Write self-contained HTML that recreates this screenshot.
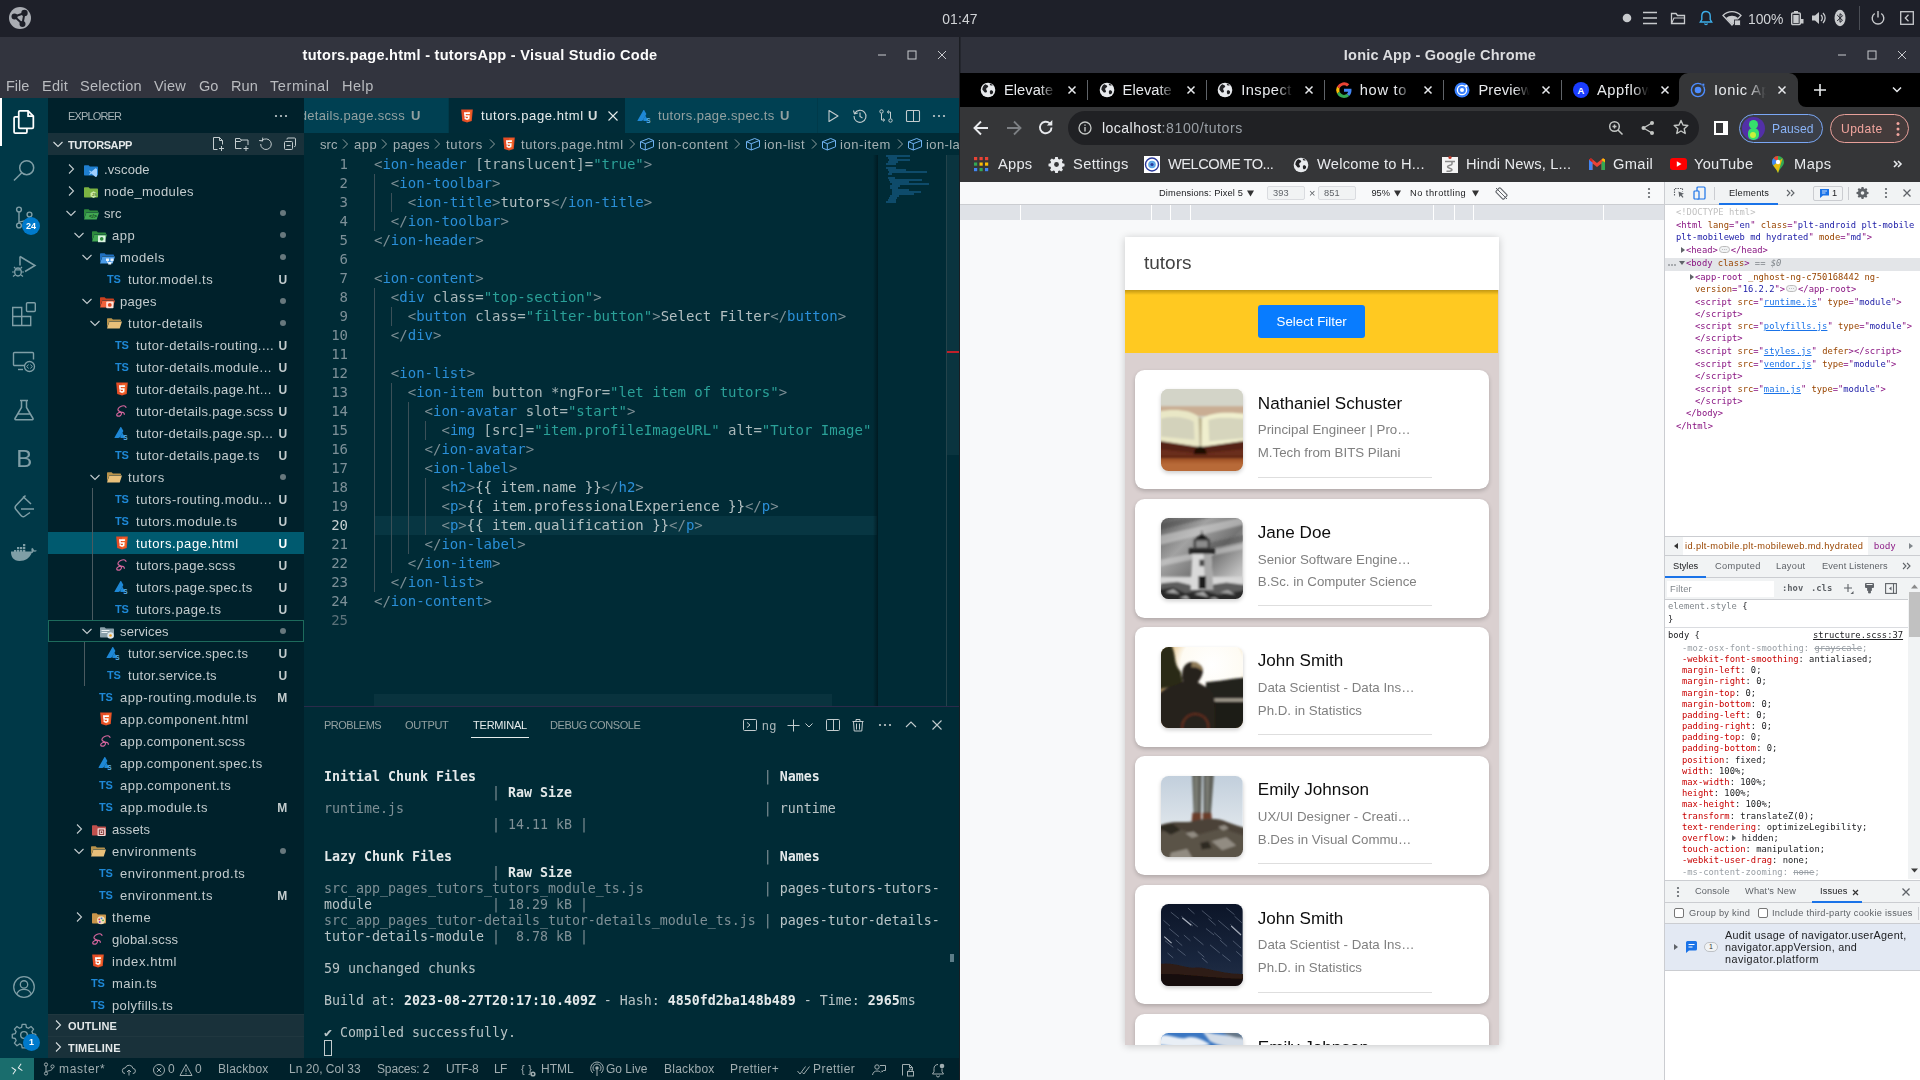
<!DOCTYPE html>
<html lang="en"><head><meta charset="utf-8"><title>tutors.page.html - tutorsApp - Visual Studio Code</title>
<style>
*{box-sizing:border-box;margin:0;padding:0}
html,body{width:1920px;height:1080px;overflow:hidden;background:#fff}
body{position:relative;font-family:"Liberation Sans",sans-serif;font-size:13px;color:#ccc;-webkit-font-smoothing:antialiased}
.n{font-family:"Liberation Sans",sans-serif;white-space:pre;position:relative;top:1px}
.m{font-family:"DejaVu Sans Mono","Liberation Mono",monospace;white-space:pre}
.a{position:absolute}
.n,.m,.g{opacity:.999}
svg{display:block;overflow:visible}
.b{font-weight:bold}
/* top panel */
#panel{left:0;top:0;width:1920px;height:37px;background:#1e2029}
#panelshade{left:0;top:36px;width:1920px;height:1px;background:#282a33}
/* title bars */
.tb{top:37px;height:36px;background:#32343e}
.tbt{top:0;height:36px;line-height:35px;font-size:14.55px;font-weight:bold;color:#fcfcfc;text-align:center;width:100%}
/* vscode */
#menu{left:0;top:73px;width:960px;height:25px;background:#32343e;color:#b9bbbf;font-size:14.55px;line-height:24px}
#act{left:0;top:98px;width:48px;height:960px;background:#003847}
#side{left:48px;top:98px;width:256px;height:960px;background:#00212b;overflow:hidden}
.row{left:0;width:256px;height:22px;line-height:22px;color:#c3ccce;font-size:13px}
.row .lbl{position:absolute;top:0}
.row .bd{position:absolute;top:0;left:225px;width:20px;text-align:center;font-size:12px;font-weight:bold;color:#c3ccce}
.row .dot{position:absolute;top:8px;left:232px;width:6px;height:6px;border-radius:3px;background:#8a9699;opacity:.75}
#tabs{left:304px;top:98px;width:656px;height:35px;background:#004052;overflow:hidden}
#bc{left:304px;top:133px;width:656px;height:22px;background:#002b36;color:#a3b0b3;font-size:13px;line-height:22px;overflow:hidden}
#ed{left:304px;top:155px;width:656px;height:551px;background:#002b36;overflow:hidden}
.cl{left:70px;height:19px;line-height:19px;font-size:14px;color:#b4c0c2}
.ln{left:0;width:44px;text-align:right;height:19px;line-height:19px;font-size:14px;color:#7d9098}
.tg{color:#2a8fd8}.pu{color:#7d8f95}.st{color:#2aa198}.at{color:#a9b8ba}
#pnl{left:304px;top:706px;width:656px;height:352px;background:#002b36;border-top:1px solid #2b2b4a;overflow:hidden}
.tl{left:20px;height:16px;line-height:16px;font-size:13.29px;color:#b9c4c6}
.dim{color:#7f9096}
.tbold{font-weight:bold;color:#e4e9ea}
#status{left:0;top:1058px;width:960px;height:22px;background:#00212b;color:#a0adb0;font-size:12px;line-height:20px}
/* chrome */
#ctabs{left:960px;top:73px;width:960px;height:34px;background:#000}
#ctool{left:960px;top:107px;width:960px;height:41px;background:#353638}
#cbm{left:960px;top:148px;width:960px;height:34px;background:#353638;color:#e8eaed;font-size:14.67px;line-height:30px}
#dvt{left:960px;top:182px;width:704px;height:23px;background:#f8f9fa;border-bottom:1px solid #cbcdd1;color:#202124;font-size:9.25px;line-height:21px}
#ruler{left:960px;top:205px;width:704px;height:15px;background:#dfe2e7}
#view{left:960px;top:220px;width:704px;height:860px;background:#f8f9fa;overflow:hidden}
#dt{left:1664px;top:182px;width:256px;height:898px;background:#fff;border-left:1px solid #cbcdd1;overflow:hidden;color:#202124}
#dt .n{top:0}
.dl{height:12.5px;line-height:12.5px;font-size:8.8px}
</style></head>
<body class="">
<div id="panel" class="a"><svg class="a" style="left:9px;top:7px" width="22" height="22" viewBox="0 0 22 22"><circle cx="11" cy="11" r="11" fill="#a9acb2"></circle><circle cx="5.500" cy="9.500" r="3" fill="#1e2029"></circle><circle cx="15.500" cy="6" r="3.200" fill="#1e2029"></circle><circle cx="13.500" cy="17" r="3" fill="#1e2029"></circle><path d="M5.500 9.500l10-3.500-2 11z" fill="none" stroke="#1e2029" stroke-width="2"></path></svg><div class="a" style="left:900px;top:0;width:120px;height:37px;line-height:36px;text-align:center;font-size:13.900px;color:#d3d5d8"><span class="n" style="letter-spacing: 0.15px;">01:47</span></div><svg class="a" style="left:1622px;top:13px" width="10" height="10" viewBox="0 0 10 10"><circle cx="5" cy="5" r="4.300" fill="#c8cacd"></circle></svg><svg class="a" style="left:1643px;top:11px" width="14" height="14" viewBox="0 0 14 14"><path d="M0 1.500h14M0 7h14M0 12.500h14" stroke="#c8cacd" stroke-width="1.700"></path></svg><svg class="a" style="left:1670px;top:10px" width="16" height="16" viewBox="0 0 16 16"><path d="M1.500 13.500v-10h4.500l1.500 2h7v8z" fill="none" stroke="#c8cacd" stroke-width="1.300"></path><path d="M1.500 13.500l2.500-5.500h10.500" fill="none" stroke="#c8cacd" stroke-width="1.100"></path></svg><svg class="a" style="left:1699px;top:10px" width="14" height="16" viewBox="0 0 14 16"><path d="M7 1.500c-2.800 0-4.200 2-4.200 4.500v3.500L1.300 12h11.400l-1.500-2.500V6c0-2.500-1.400-4.500-4.200-4.500z" fill="none" stroke="#3daee9" stroke-width="1.400"></path><path d="M5.500 13.500a1.600 1.600 0 003 0" fill="none" stroke="#3daee9" stroke-width="1.300"></path></svg><svg class="a" style="left:1722px;top:10px" width="20" height="16" viewBox="0 0 20 16"><path d="M1 5.500a12.500 12.500 0 0118 0L10 15z" fill="none" stroke="#c8cacd" stroke-width="1.300"></path><path d="M4 8a9 9 0 0112 0L10 14.500z" fill="#c8cacd"></path><rect x="12.500" y="10" width="6" height="5.500" fill="#c8cacd" stroke="#1e2029" stroke-width=".8"></rect></svg><div class="a" style="left:1748px;top:0;height:37px;line-height:36px;font-size:13.900px;color:#d3d5d8"><span class="n" style="letter-spacing: -0.04px;">100%</span></div><svg class="a" style="left:1790px;top:10px" width="14" height="16" viewBox="0 0 14 16"><rect x="1.700" y="3" width="8.600" height="11.500" rx="1" fill="none" stroke="#c8cacd" stroke-width="1.400"></rect><rect x="4" y="1" width="4" height="2" fill="#c8cacd"></rect><rect x="3.300" y="5" width="5.400" height="8" fill="#c8cacd"></rect><path d="M10 9h3.500v4.500H10z" fill="#c8cacd"></path></svg><svg class="a" style="left:1811px;top:10px" width="17" height="16" viewBox="0 0 17 16"><path d="M1 5.500h3l4-3.500v12l-4-3.500H1z" fill="#c8cacd"></path><path d="M10 5a4 4 0 010 6M12 3a7 7 0 010 10" fill="none" stroke="#c8cacd" stroke-width="1.300"></path></svg><svg class="a" style="left:1834px;top:9px" width="12" height="18" viewBox="0 0 12 18"><ellipse cx="6" cy="9" rx="5.500" ry="8.300" fill="#c8cacd"></ellipse><path d="M3.200 6l5.300 5.300L6 13.300V4.700l2.500 2L3.200 12" fill="none" stroke="#1e2029" stroke-width="1"></path></svg><div class="a" style="left:1859px;top:6px;width:1px;height:24px;background:#4a4d55"></div><svg class="a" style="left:1870px;top:10px" width="16" height="16" viewBox="0 0 16 16"><path d="M8 1v6.500" stroke="#c8cacd" stroke-width="1.400"></path><path d="M4.700 3.500a5.800 5.800 0 106.600 0" fill="none" stroke="#c8cacd" stroke-width="1.400"></path></svg><svg class="a" style="left:1900px;top:11px" width="14" height="14" viewBox="0 0 14 14"><rect x=".7" y=".7" width="12.600" height="12.600" fill="none" stroke="#c8cacd" stroke-width="1.300"></rect><path d="M8.500 3.800L5.300 7l3.200 3.200" fill="none" stroke="#c8cacd" stroke-width="1.300"></path></svg></div><div class="a tb" style="left:0;width:960px"><div class="a tbt"><span class="n" style="letter-spacing: 0.27px;">tutors.page.html - tutorsApp - Visual Studio Code</span></div><svg class="a" style="left:876px;top:12px" width="12" height="12" viewBox="0 0 12 12"><path d="M2 6h8" stroke="#c9cbcf" stroke-width="1"></path></svg><svg class="a" style="left:906px;top:12px" width="12" height="12" viewBox="0 0 12 12"><rect x="2" y="2" width="8" height="8" fill="none" stroke="#c9cbcf" stroke-width="1"></rect></svg><svg class="a" style="left:936px;top:12px" width="12" height="12" viewBox="0 0 12 12"><path d="M2 2l8 8M10 2l-8 8" stroke="#c9cbcf" stroke-width="1"></path></svg></div><div id="menu" class="a"><span class="a" style="left:6px;top:0"><span class="n" style="letter-spacing: -0.05px;">File</span></span><span class="a" style="left:42px;top:0"><span class="n" style="letter-spacing: 0.24px;">Edit</span></span><span class="a" style="left:80px;top:0"><span class="n" style="letter-spacing: 0.23px;">Selection</span></span><span class="a" style="left:154px;top:0"><span class="n" style="letter-spacing: 0.14px;">View</span></span><span class="a" style="left:199px;top:0"><span class="n">Go</span></span><span class="a" style="left:231px;top:0"><span class="n" style="letter-spacing: 0.11px;">Run</span></span><span class="a" style="left:270px;top:0"><span class="n" style="letter-spacing: 0.57px;">Terminal</span></span><span class="a" style="left:342px;top:0"><span class="n" style="letter-spacing: 0.44px;">Help</span></span></div><div id="act" class="a"><div class="a" style="left:0;top:0;width:2px;height:48px;background:#fff"></div><svg class="a" style="left:10px;top:10px" width="28" height="28" viewBox="0 0 24 24"><path d="M8.500 2.500h7l4.500 4.500v9.500a1 1 0 01-1 1h-10.500a1 1 0 01-1-1v-13a1 1 0 011-1z" fill="none" stroke="#fff" stroke-width="1.500"></path><path d="M15.500 2.500v4.500h4.500" fill="none" stroke="#fff" stroke-width="1.500"></path><path d="M7.500 7.500h-3a1 1 0 00-1 1v12a1 1 0 001 1h9a1 1 0 001-1v-3" fill="none" stroke="#fff" stroke-width="1.500"></path></svg><svg class="a" style="left:12px;top:60px" width="24" height="24" viewBox="0 0 24 24"><circle cx="14.700" cy="9.700" r="7" fill="none" stroke="#7f9ea6" stroke-width="1.500"></circle><path d="M9.800 14.700L2 22.500" stroke="#7f9ea6" stroke-width="1.500"></path></svg><svg class="a" style="left:12px;top:107px" width="24" height="24" viewBox="0 0 24 24"><circle cx="7" cy="4.500" r="2.400" fill="none" stroke="#7f9ea6" stroke-width="1.400"></circle><circle cx="7" cy="20.500" r="2.400" fill="none" stroke="#7f9ea6" stroke-width="1.400"></circle><circle cx="17.500" cy="9.500" r="2.400" fill="none" stroke="#7f9ea6" stroke-width="1.400"></circle><path d="M7 7v11M17.500 12c0 3.500-5 4-10 5" fill="none" stroke="#7f9ea6" stroke-width="1.400"></path></svg><div class="a b" style="left:22px;top:119px;width:18px;height:18px;border-radius:9px;background:#007acc;color:#fff;font-size:9px;line-height:18px;text-align:center"><span class="g">24</span></div><svg class="a" style="left:10px;top:155px" width="28" height="26" viewBox="0 0 28 26"><path d="M10 3.500v0L25 12.500 15 18.500" fill="none" stroke="#7f9ea6" stroke-width="1.500"></path><path d="M10 3.500v9" stroke="#7f9ea6" stroke-width="1.500"></path><ellipse cx="8" cy="19" rx="3.300" ry="4" fill="none" stroke="#7f9ea6" stroke-width="1.400"></ellipse><path d="M5.500 15.500L4 14M10.500 15.500L12 14M4.500 19H2M11.500 19H14M5 22l-2 1.500M11 22l2 1.500M5 16.800h6" fill="none" stroke="#7f9ea6" stroke-width="1.200"></path></svg><svg class="a" style="left:12px;top:204px" width="24" height="24" viewBox="0 0 24 24"><path d="M.700 5.500h9v9h9v9h-18zM.700 14.500h9M9.700 14.500v9" fill="none" stroke="#7f9ea6" stroke-width="1.400"></path><rect x="14.500" y=".700" width="8.800" height="8.800" rx="1" fill="none" stroke="#7f9ea6" stroke-width="1.400"></rect></svg><svg class="a" style="left:12px;top:252px" width="24" height="24" viewBox="0 0 24 24"><path d="M12 15.500H2.500a1 1 0 01-1-1v-11a1 1 0 011-1h18a1 1 0 011 1v6" fill="none" stroke="#7f9ea6" stroke-width="1.400"></path><path d="M6 19.500h5" stroke="#7f9ea6" stroke-width="1.400"></path><circle cx="17.500" cy="16.500" r="5" fill="none" stroke="#7f9ea6" stroke-width="1.300"></circle><path d="M16.500 14.500l-1.700 2 1.700 2M18.500 14.500l1.700 2-1.700 2" fill="none" stroke="#7f9ea6" stroke-width="1"></path></svg><svg class="a" style="left:12px;top:300px" width="24" height="24" viewBox="0 0 24 24"><path d="M8 2.500h8M9.500 2.500v7L3 20.500a.8.800 0 00.700 1.200h16.600a.8.800 0 00.700-1.200L14.500 9.500v-7M6 16h12" fill="none" stroke="#7f9ea6" stroke-width="1.500"></path></svg><div class="a" style="left:0;top:346px;width:48px;height:28px;line-height:28px;text-align:center;font-size:24px;color:#7f9ea6"><span class="n" style="letter-spacing: -0.41px;">B</span></div><svg class="a" style="left:12px;top:396px" width="24" height="26" viewBox="0 0 24 26"><path d="M13.500 1.500L4 11.500a3 3 0 000 4l5 6a3 3 0 004 .5l5-3.500" fill="none" stroke="#7f9ea6" stroke-width="1.500"></path><path d="M11 2.500l8 7.500" fill="none" stroke="#7f9ea6" stroke-width="1.500"></path><path d="M9 15h13" stroke="#7f9ea6" stroke-width="1.500"></path></svg><svg class="a" style="left:10px;top:446px" width="28" height="22" viewBox="0 0 28 22"><path d="M1 9.500h19.500c1.500 0 2.500-.7 3-2 1 .3 2.500.2 3.500-.8-.8-.5-2-.7-3-.3-.2-1.300-1-2.200-2-2.700-.8 1.200-.8 2.600-.2 3.800H1c-.3 5 2.500 9.500 8.500 9.500 6 0 10-3 12-7.500z" fill="#7f9ea6"></path><path d="M4 6h2.300v2.300H4zM7 6h2.300v2.300H7zM10 6h2.300v2.300H10zM13 6h2.300v2.300H13zM7 3h2.300v2.300H7zM10 3h2.300v2.300H10zM13 3h2.300v2.300H13zM13 0h2.300v2.300H13z" fill="#7f9ea6"></path></svg><svg class="a" style="left:12px;top:877px" width="24" height="24" viewBox="0 0 28 28"><circle cx="14" cy="14" r="12" fill="none" stroke="#7f9ea6" stroke-width="1.500"></circle><circle cx="14" cy="11" r="4.300" fill="none" stroke="#7f9ea6" stroke-width="1.500"></circle><path d="M5.500 22.300c1.500-4 4.500-5.500 8.500-5.500s7 1.500 8.500 5.500" fill="none" stroke="#7f9ea6" stroke-width="1.500"></path></svg><svg class="a" style="left:12px;top:925px" width="24" height="24" viewBox="0 0 26 26"><circle cx="13" cy="13" r="3.600" fill="none" stroke="#7f9ea6" stroke-width="1.500"></circle><path d="M11 1.500h4l.6 3.200 2.300 1 2.700-1.900 2.800 2.800-1.900 2.700 1 2.300 3.200.6v4l-3.200.6-1 2.300 1.900 2.700-2.800 2.800-2.700-1.900-2.300 1-.6 3.200h-4l-.6-3.200-2.300-1-2.700 1.900-2.800-2.800 1.900-2.700-1-2.300-3.200-.6v-4l3.200-.6 1-2.300-1.900-2.700 2.800-2.800 2.700 1.900 2.300-1z" fill="none" stroke="#7f9ea6" stroke-width="1.400" stroke-linejoin="round"></path></svg><div class="a b" style="left:23px;top:936px;width:17px;height:17px;border-radius:9px;background:#007acc;color:#fff;font-size:9px;line-height:17px;text-align:center"><span class="g">1</span></div></div><div id="side" class="a"><div class="a" style="left:20px;top:0;height:35px;line-height:35px;font-size:11px;color:#a7b3b6"><span class="n" style="letter-spacing: -0.85px;">EXPLORER</span></div><svg class="a" style="left:225px;top:10px" width="16" height="16" viewBox="0 0 16 16"><circle cx="3" cy="8" r="1.100" fill="#c3ccce"></circle><circle cx="8" cy="8" r="1.100" fill="#c3ccce"></circle><circle cx="13" cy="8" r="1.100" fill="#c3ccce"></circle></svg><div class="a" style="left:0;top:35px;width:256px;height:22px;background:#19313a"></div><svg class="a" style="left:2px;top:38px" width="16" height="16" viewBox="0 0 16 16"><path d="M3.5 6l4.5 4.5L12.5 6" fill="none" stroke="#d5dcde" stroke-width="1.1"></path></svg><div class="a b" style="left:20px;top:35px;height:22px;line-height:22px;font-size:11px;color:#e3e8e9"><span class="n b" style="letter-spacing: -0.4px;">TUTORSAPP</span></div><svg class="a" style="left:162px;top:38px" width="16" height="16" viewBox="0 0 16 16"><path d="M9.500 1.500H3.500v12h4M9.500 1.500l3 3v4M9.500 1.500v3h3" fill="none" stroke="#c3ccce" stroke-width="1"></path><path d="M11.500 10v5M9 12.500h5" stroke="#c3ccce" stroke-width="1"></path></svg><svg class="a" style="left:186px;top:38px" width="16" height="16" viewBox="0 0 16 16"><path d="M7.500 12.500H1.500v-10h4.500l1 1.500h7v5" fill="none" stroke="#c3ccce" stroke-width="1"></path><path d="M1.500 5.500h5l1-1.500" fill="none" stroke="#c3ccce" stroke-width="1"></path><path d="M12 10v5M9.500 12.500h5" stroke="#c3ccce" stroke-width="1"></path></svg><svg class="a" style="left:210px;top:38px" width="16" height="16" viewBox="0 0 16 16"><path d="M4.200 4.500A5.300 5.300 0 112.700 8" fill="none" stroke="#c3ccce" stroke-width="1"></path><path d="M4.500 1.500v3.300h-3.300" fill="none" stroke="#c3ccce" stroke-width="1" transform="rotate(8 4 4)"></path></svg><svg class="a" style="left:234px;top:38px" width="16" height="16" viewBox="0 0 16 16"><rect x="2.500" y="5.500" width="8" height="8" rx="1" fill="none" stroke="#c3ccce" stroke-width="1"></rect><path d="M5 3.500v-.5a1 1 0 011-1h6.500a1 1 0 011 1v6.500a1 1 0 01-1 1h-.5" fill="none" stroke="#c3ccce" stroke-width="1"></path><path d="M4.500 9.500h4" stroke="#c3ccce" stroke-width="1"></path></svg><div class="a row" style="top:60px;"><svg class="a" style="left:15px;top:3px" width="16" height="16" viewBox="0 0 16 16"><path d="M6 3.5l4.5 4.5L6 12.5" fill="none" stroke="#c3ccce" stroke-width="1.1"></path></svg><svg class="a" style="left:35px;top:4px" width="16" height="16" viewBox="0 0 16 16"><path d="M1 4.200c0-.6.400-1 1-1h3.600l1.300 1.400H14c.6 0 1 .4 1 1v7c0 .6-.4 1-1 1H2c-.6 0-1-.4-1-1z" fill="#1f7fd0"></path><path d="M12.500 6.300 8.300 9.800l-1.500-1.200-.8.500 1.600 1.600L6 12.300l.8.500 1.500-1.200 4.200 3.500 1.500-.7V7z" fill="#9fd0ff"></path></svg><span class="lbl" style="left:56px;top:0px;color:#c3ccce"><span class="n" style="letter-spacing: 0.13px;">.vscode</span></span></div><div class="a row" style="top:82px;"><svg class="a" style="left:15px;top:3px" width="16" height="16" viewBox="0 0 16 16"><path d="M6 3.5l4.5 4.5L6 12.5" fill="none" stroke="#c3ccce" stroke-width="1.1"></path></svg><svg class="a" style="left:35px;top:4px" width="16" height="16" viewBox="0 0 16 16"><path d="M1 4.200c0-.6.400-1 1-1h3.600l1.300 1.400H14c.6 0 1 .4 1 1v7c0 .6-.4 1-1 1H2c-.6 0-1-.4-1-1z" fill="#7cb342"></path><path d="M10.500 7.200l3 1.700v3.400l-3 1.700-3-1.700V8.900z" fill="#c9e6a8"></path><text x="9" y="12.300" font-size="4" fill="#4a7c1c" font-family="Liberation Sans,sans-serif" font-weight="bold">JS</text></svg><span class="lbl" style="left:56px;top:0px;color:#c3ccce"><span class="n" style="letter-spacing: 0.39px;">node_modules</span></span></div><div class="a row" style="top:104px;"><svg class="a" style="left:15px;top:3px" width="16" height="16" viewBox="0 0 16 16"><path d="M3.5 6l4.5 4.5L12.5 6" fill="none" stroke="#c3ccce" stroke-width="1.1"></path></svg><svg class="a" style="left:35px;top:4px" width="16" height="16" viewBox="0 0 16 16"><path d="M1 4.200c0-.6.400-1 1-1h3.600l1.300 1.400H14c.6 0 1 .4 1 1v.4H3.600L1 12.500z" fill="#2e8b3d"></path><path d="M3.400 6.400H16l-2.300 7.200H1z" fill="#43a853"></path><text x="6" y="12.300" font-size="5.500" fill="#0c3d17" font-family="Liberation Sans,sans-serif" font-weight="bold">&lt;/&gt;</text></svg><span class="lbl" style="left:56px;top:0px;color:#c3ccce"><span class="n" style="letter-spacing: 0.08px;">src</span></span><span class="dot" style="margin:0px 0 0 0px"></span></div><div class="a row" style="top:126px;"><svg class="a" style="left:23px;top:3px" width="16" height="16" viewBox="0 0 16 16"><path d="M3.5 6l4.5 4.5L12.5 6" fill="none" stroke="#c3ccce" stroke-width="1.1"></path></svg><svg class="a" style="left:43px;top:4px" width="16" height="16" viewBox="0 0 16 16"><path d="M1 4.200c0-.6.400-1 1-1h3.600l1.300 1.400H14c.6 0 1 .4 1 1v.4H3.600L1 12.500z" fill="#2e8b3d"></path><path d="M3.400 6.400H16l-2.300 7.200H1z" fill="#43a853"></path><rect x="7" y="7.500" width="7.500" height="6.700" fill="#d9f2de"></rect><circle cx="10.700" cy="10.900" r="1.800" fill="#2e8b3d"></circle></svg><span class="lbl" style="left:64px;top:0px;color:#c3ccce"><span class="n" style="letter-spacing: 0.53px;">app</span></span><span class="dot" style="margin:0px 0 0 0px"></span></div><div class="a row" style="top:148px;"><svg class="a" style="left:31px;top:3px" width="16" height="16" viewBox="0 0 16 16"><path d="M3.5 6l4.5 4.5L12.5 6" fill="none" stroke="#c3ccce" stroke-width="1.1"></path></svg><svg class="a" style="left:51px;top:4px" width="16" height="16" viewBox="0 0 16 16"><path d="M1 4.200c0-.6.400-1 1-1h3.600l1.300 1.400H14c.6 0 1 .4 1 1v.4H3.600L1 12.500z" fill="#1f6fc0"></path><path d="M3.400 6.400H16l-2.300 7.200H1z" fill="#4a9be8"></path><path d="M7 8.500h3v2.500H7zM11.500 8.500h3v2.500h-3zM9.200 12h3v2.500h-3z" fill="#e6f1fb"></path><path d="M8.500 11v1.700h.7M13 11v1.700h-.8" stroke="#e6f1fb" stroke-width=".7" fill="none"></path></svg><span class="lbl" style="left:72px;top:0px;color:#c3ccce"><span class="n" style="letter-spacing: 0.5px;">models</span></span><span class="dot" style="margin:0px 0 0 0px"></span></div><div class="a row" style="top:170px;"><span class="a b g" style="left:59px;top:3px;width:16px;height:16px;line-height:16px;font-size:11px;color:#1e88d6;letter-spacing:-0.3px;font-family:'Liberation Sans',sans-serif">TS</span><span class="lbl" style="left:80px;top:0px;color:#c3ccce"><span class="n" style="letter-spacing: 0.51px;">tutor.model.ts</span></span><span class="bd" style="color:#c3ccce"><span class="n b" style="letter-spacing: 0.41px;">U</span></span></div><div class="a row" style="top:192px;"><svg class="a" style="left:31px;top:3px" width="16" height="16" viewBox="0 0 16 16"><path d="M3.5 6l4.5 4.5L12.5 6" fill="none" stroke="#c3ccce" stroke-width="1.1"></path></svg><svg class="a" style="left:51px;top:4px" width="16" height="16" viewBox="0 0 16 16"><path d="M1 4.200c0-.6.400-1 1-1h3.600l1.300 1.400H14c.6 0 1 .4 1 1v.4H3.600L1 12.500z" fill="#c9401f"></path><path d="M3.400 6.400H16l-2.300 7.200H1z" fill="#f0623b"></path><rect x="7.200" y="7.600" width="7.300" height="6.600" rx=".8" fill="#ffe3da"></rect><circle cx="10.800" cy="10.900" r="1.900" fill="#e0481f"></circle></svg><span class="lbl" style="left:72px;top:0px;color:#c3ccce"><span class="n" style="letter-spacing: 0.28px;">pages</span></span><span class="dot" style="margin:0px 0 0 0px"></span></div><div class="a row" style="top:214px;"><svg class="a" style="left:39px;top:3px" width="16" height="16" viewBox="0 0 16 16"><path d="M3.5 6l4.5 4.5L12.5 6" fill="none" stroke="#c3ccce" stroke-width="1.1"></path></svg><svg class="a" style="left:58px;top:3px" width="16" height="16" viewBox="0 0 16 16"><path d="M1 4.200c0-.6.400-1 1-1h3.600l1.300 1.400H14c.6 0 1 .4 1 1v.4H3.600L1 12.500z" fill="#b8934c"></path><path d="M3.400 6.400H16l-2.300 7.200H1z" fill="#e8c07a"></path></svg><span class="lbl" style="left:80px;top:0px;color:#c3ccce"><span class="n" style="letter-spacing: 0.55px;">tutor-details</span></span><span class="dot" style="margin:0px 0 0 0px"></span></div><div class="a row" style="top:236px;"><span class="a b g" style="left:67px;top:3px;width:16px;height:16px;line-height:16px;font-size:11px;color:#1e88d6;letter-spacing:-0.3px;font-family:'Liberation Sans',sans-serif">TS</span><span class="lbl" style="left:88px;top:0px;color:#c3ccce"><span class="n" style="letter-spacing: 0.47px;">tutor-details-routing....</span></span><span class="bd" style="color:#c3ccce"><span class="n b" style="letter-spacing: 0.41px;">U</span></span></div><div class="a row" style="top:258px;"><span class="a b g" style="left:67px;top:3px;width:16px;height:16px;line-height:16px;font-size:11px;color:#1e88d6;letter-spacing:-0.3px;font-family:'Liberation Sans',sans-serif">TS</span><span class="lbl" style="left:88px;top:0px;color:#c3ccce"><span class="n" style="letter-spacing: 0.47px;">tutor-details.module...</span></span><span class="bd" style="color:#c3ccce"><span class="n b" style="letter-spacing: 0.41px;">U</span></span></div><div class="a row" style="top:280px;"><svg class="a" style="left:66px;top:3px" width="16" height="16" viewBox="0 0 16 16"><path d="M2.2 1.5h11.6l-1.05 11.6L8 14.6l-4.75-1.5z" fill="#e44d26"></path><path d="M8 2.5v11l3.8-1.2.9-9.8z" fill="#f16529"></path><path d="M5 4.3h6l-.15 1.6H6.7l.1 1.3h3.9l-.35 3.9L8 11.9l-2.4-.8-.15-1.8h1.5l.1.75.95.3.95-.3.1-1.3H5.4z" fill="#fff"></path></svg><span class="lbl" style="left:88px;top:0px;color:#c3ccce"><span class="n" style="letter-spacing: 0.42px;">tutor-details.page.ht...</span></span><span class="bd" style="color:#c3ccce"><span class="n b" style="letter-spacing: 0.41px;">U</span></span></div><div class="a row" style="top:302px;"><svg class="a" style="left:65px;top:3px" width="16" height="16" viewBox="0 0 16 16"><path d="M13 4.300c-.3-1.700-3-2-5.300-.8C5.500 4.600 4.300 6.300 5.300 7.500c1 1.200 3 1.400 3.200 2.900.2 1.500-1.700 3-3.400 2.800-1.500-.2-1.800-1.500-.8-2.500 1.200-1.200 3.500-1.700 5.200-1.300 1.300.3 2 1.100 1.800 1.900" fill="none" stroke="#cf649a" stroke-width="1.200" stroke-linecap="round"></path></svg><span class="lbl" style="left:88px;top:0px;color:#c3ccce"><span class="n" style="letter-spacing: 0.33px;">tutor-details.page.scss</span></span><span class="bd" style="color:#c3ccce"><span class="n b" style="letter-spacing: 0.41px;">U</span></span></div><div class="a row" style="top:324px;"><svg class="a" style="left:65px;top:3px" width="16" height="16" viewBox="0 0 16 16"><path d="M1.5 12.500 7.200 2.400c.3-.5.9-.5 1.200 0l2 3.500-3.400 6c-.4.700-1 1.100-1.800 1.100H2.100c-.6 0-.9-.5-.6-.5z" fill="#1e88d6"></path><path d="M9.200 7.400l2.300 4c.4.700.1 1.600-.9 1.600H8.200c-.9 0-1.300-.8-.9-1.500z" fill="#1e88d6"></path><text x="10.200" y="14.800" font-size="6.500" font-weight="bold" fill="#5fb0ea" font-family="Liberation Sans,sans-serif">S</text></svg><span class="lbl" style="left:88px;top:0px;color:#c3ccce"><span class="n" style="letter-spacing: 0.36px;">tutor-details.page.sp...</span></span><span class="bd" style="color:#c3ccce"><span class="n b" style="letter-spacing: 0.41px;">U</span></span></div><div class="a row" style="top:346px;"><span class="a b g" style="left:67px;top:3px;width:16px;height:16px;line-height:16px;font-size:11px;color:#1e88d6;letter-spacing:-0.3px;font-family:'Liberation Sans',sans-serif">TS</span><span class="lbl" style="left:88px;top:0px;color:#c3ccce"><span class="n" style="letter-spacing: 0.45px;">tutor-details.page.ts</span></span><span class="bd" style="color:#c3ccce"><span class="n b" style="letter-spacing: 0.41px;">U</span></span></div><div class="a row" style="top:368px;"><svg class="a" style="left:39px;top:3px" width="16" height="16" viewBox="0 0 16 16"><path d="M3.5 6l4.5 4.5L12.5 6" fill="none" stroke="#c3ccce" stroke-width="1.1"></path></svg><svg class="a" style="left:58px;top:3px" width="16" height="16" viewBox="0 0 16 16"><path d="M1 4.200c0-.6.400-1 1-1h3.600l1.300 1.400H14c.6 0 1 .4 1 1v.4H3.600L1 12.500z" fill="#b8934c"></path><path d="M3.400 6.400H16l-2.300 7.200H1z" fill="#e8c07a"></path></svg><span class="lbl" style="left:80px;top:0px;color:#c3ccce"><span class="n" style="letter-spacing: 0.73px;">tutors</span></span><span class="dot" style="margin:0px 0 0 0px"></span></div><div class="a row" style="top:390px;"><span class="a b g" style="left:67px;top:3px;width:16px;height:16px;line-height:16px;font-size:11px;color:#1e88d6;letter-spacing:-0.3px;font-family:'Liberation Sans',sans-serif">TS</span><span class="lbl" style="left:88px;top:0px;color:#c3ccce"><span class="n" style="letter-spacing: 0.57px;">tutors-routing.modu...</span></span><span class="bd" style="color:#c3ccce"><span class="n b" style="letter-spacing: 0.41px;">U</span></span></div><div class="a row" style="top:412px;"><span class="a b g" style="left:67px;top:3px;width:16px;height:16px;line-height:16px;font-size:11px;color:#1e88d6;letter-spacing:-0.3px;font-family:'Liberation Sans',sans-serif">TS</span><span class="lbl" style="left:88px;top:0px;color:#c3ccce"><span class="n" style="letter-spacing: 0.56px;">tutors.module.ts</span></span><span class="bd" style="color:#c3ccce"><span class="n b" style="letter-spacing: 0.41px;">U</span></span></div><div class="a row" style="top:434px;background:#005a6f;"><svg class="a" style="left:66px;top:3px" width="16" height="16" viewBox="0 0 16 16"><path d="M2.2 1.5h11.6l-1.05 11.6L8 14.6l-4.75-1.5z" fill="#e44d26"></path><path d="M8 2.5v11l3.8-1.2.9-9.8z" fill="#f16529"></path><path d="M5 4.3h6l-.15 1.6H6.7l.1 1.3h3.9l-.35 3.9L8 11.9l-2.4-.8-.15-1.8h1.5l.1.75.95.3.95-.3.1-1.3H5.4z" fill="#fff"></path></svg><span class="lbl" style="left:88px;top:0px;color:#fff"><span class="n" style="letter-spacing: 0.59px;">tutors.page.html</span></span><span class="bd" style="color:#fff"><span class="n b" style="letter-spacing: 0.41px;">U</span></span></div><div class="a row" style="top:456px;"><svg class="a" style="left:65px;top:3px" width="16" height="16" viewBox="0 0 16 16"><path d="M13 4.300c-.3-1.700-3-2-5.300-.8C5.500 4.600 4.300 6.300 5.300 7.500c1 1.200 3 1.400 3.200 2.900.2 1.500-1.700 3-3.400 2.800-1.500-.2-1.800-1.500-.8-2.500 1.200-1.200 3.500-1.700 5.200-1.300 1.300.3 2 1.100 1.800 1.900" fill="none" stroke="#cf649a" stroke-width="1.200" stroke-linecap="round"></path></svg><span class="lbl" style="left:88px;top:0px;color:#c3ccce"><span class="n" style="letter-spacing: 0.3px;">tutors.page.scss</span></span><span class="bd" style="color:#c3ccce"><span class="n b" style="letter-spacing: 0.41px;">U</span></span></div><div class="a row" style="top:478px;"><svg class="a" style="left:65px;top:3px" width="16" height="16" viewBox="0 0 16 16"><path d="M1.5 12.500 7.200 2.400c.3-.5.9-.5 1.200 0l2 3.500-3.400 6c-.4.700-1 1.100-1.800 1.100H2.100c-.6 0-.9-.5-.6-.5z" fill="#1e88d6"></path><path d="M9.200 7.400l2.300 4c.4.700.1 1.600-.9 1.600H8.200c-.9 0-1.300-.8-.9-1.500z" fill="#1e88d6"></path><text x="10.200" y="14.800" font-size="6.500" font-weight="bold" fill="#5fb0ea" font-family="Liberation Sans,sans-serif">S</text></svg><span class="lbl" style="left:88px;top:0px;color:#c3ccce"><span class="n" style="letter-spacing: 0.36px;">tutors.page.spec.ts</span></span><span class="bd" style="color:#c3ccce"><span class="n b" style="letter-spacing: 0.41px;">U</span></span></div><div class="a row" style="top:500px;"><span class="a b g" style="left:67px;top:3px;width:16px;height:16px;line-height:16px;font-size:11px;color:#1e88d6;letter-spacing:-0.3px;font-family:'Liberation Sans',sans-serif">TS</span><span class="lbl" style="left:88px;top:0px;color:#c3ccce"><span class="n" style="letter-spacing: 0.47px;">tutors.page.ts</span></span><span class="bd" style="color:#c3ccce"><span class="n b" style="letter-spacing: 0.41px;">U</span></span></div><div class="a row" style="top:522px;border:1px solid #1d6b5c;"><svg class="a" style="left:30px;top:2px" width="16" height="16" viewBox="0 0 16 16"><path d="M3.5 6l4.5 4.5L12.5 6" fill="none" stroke="#c3ccce" stroke-width="1.1"></path></svg><svg class="a" style="left:50px;top:3px" width="16" height="16" viewBox="0 0 16 16"><path d="M1 4.200c0-.6.400-1 1-1h3.600l1.300 1.400H14c.6 0 1 .4 1 1v7c0 .6-.4 1-1 1H2c-.6 0-1-.4-1-1z" fill="#8aa0aa"></path><rect x="2.500" y="6" width="8" height="1" fill="#e9eff2"></rect><rect x="2.500" y="8" width="6" height="1" fill="#e9eff2"></rect><circle cx="11.500" cy="11.500" r="3.200" fill="#dfe7ea"></circle><circle cx="11.500" cy="11.500" r="1.300" fill="#f0a020"></circle></svg><span class="lbl" style="left:71px;top:-1px;color:#c3ccce"><span class="n" style="letter-spacing: 0.13px;">services</span></span><span class="dot" style="margin:-1px 0 0 -1px"></span></div><div class="a row" style="top:544px;"><svg class="a" style="left:57px;top:3px" width="16" height="16" viewBox="0 0 16 16"><path d="M1.5 12.500 7.200 2.400c.3-.5.9-.5 1.200 0l2 3.500-3.400 6c-.4.700-1 1.100-1.800 1.100H2.100c-.6 0-.9-.5-.6-.5z" fill="#1e88d6"></path><path d="M9.200 7.400l2.300 4c.4.700.1 1.600-.9 1.600H8.200c-.9 0-1.300-.8-.9-1.500z" fill="#1e88d6"></path><text x="10.200" y="14.800" font-size="6.500" font-weight="bold" fill="#5fb0ea" font-family="Liberation Sans,sans-serif">S</text></svg><span class="lbl" style="left:80px;top:0px;color:#c3ccce"><span class="n" style="letter-spacing: 0.25px;">tutor.service.spec.ts</span></span><span class="bd" style="color:#c3ccce"><span class="n b" style="letter-spacing: 0.41px;">U</span></span></div><div class="a row" style="top:566px;"><span class="a b g" style="left:59px;top:3px;width:16px;height:16px;line-height:16px;font-size:11px;color:#1e88d6;letter-spacing:-0.3px;font-family:'Liberation Sans',sans-serif">TS</span><span class="lbl" style="left:80px;top:0px;color:#c3ccce"><span class="n" style="letter-spacing: 0.32px;">tutor.service.ts</span></span><span class="bd" style="color:#c3ccce"><span class="n b" style="letter-spacing: 0.41px;">U</span></span></div><div class="a row" style="top:588px;"><span class="a b g" style="left:51px;top:3px;width:16px;height:16px;line-height:16px;font-size:11px;color:#1e88d6;letter-spacing:-0.3px;font-family:'Liberation Sans',sans-serif">TS</span><span class="lbl" style="left:72px;top:0px;color:#c3ccce"><span class="n" style="letter-spacing: 0.54px;">app-routing.module.ts</span></span><span class="bd" style="color:#c3ccce"><span class="n b" style="letter-spacing: 1.33px;">M</span></span></div><div class="a row" style="top:610px;"><svg class="a" style="left:50px;top:3px" width="16" height="16" viewBox="0 0 16 16"><path d="M2.2 1.5h11.6l-1.05 11.6L8 14.6l-4.75-1.5z" fill="#e44d26"></path><path d="M8 2.5v11l3.8-1.2.9-9.8z" fill="#f16529"></path><path d="M5 4.3h6l-.15 1.6H6.7l.1 1.3h3.9l-.35 3.9L8 11.9l-2.4-.8-.15-1.8h1.5l.1.75.95.3.95-.3.1-1.3H5.4z" fill="#fff"></path></svg><span class="lbl" style="left:72px;top:0px;color:#c3ccce"><span class="n" style="letter-spacing: 0.61px;">app.component.html</span></span></div><div class="a row" style="top:632px;"><svg class="a" style="left:49px;top:3px" width="16" height="16" viewBox="0 0 16 16"><path d="M13 4.300c-.3-1.700-3-2-5.300-.8C5.500 4.600 4.300 6.300 5.300 7.500c1 1.200 3 1.400 3.200 2.900.2 1.500-1.700 3-3.400 2.800-1.500-.2-1.800-1.500-.8-2.500 1.200-1.200 3.500-1.700 5.200-1.300 1.300.3 2 1.100 1.800 1.900" fill="none" stroke="#cf649a" stroke-width="1.200" stroke-linecap="round"></path></svg><span class="lbl" style="left:72px;top:0px;color:#c3ccce"><span class="n" style="letter-spacing: 0.34px;">app.component.scss</span></span></div><div class="a row" style="top:654px;"><svg class="a" style="left:49px;top:3px" width="16" height="16" viewBox="0 0 16 16"><path d="M1.5 12.500 7.200 2.400c.3-.5.9-.5 1.200 0l2 3.500-3.400 6c-.4.700-1 1.100-1.800 1.100H2.100c-.6 0-.9-.5-.6-.5z" fill="#1e88d6"></path><path d="M9.200 7.400l2.300 4c.4.700.1 1.600-.9 1.600H8.200c-.9 0-1.300-.8-.9-1.500z" fill="#1e88d6"></path><text x="10.200" y="14.800" font-size="6.500" font-weight="bold" fill="#5fb0ea" font-family="Liberation Sans,sans-serif">S</text></svg><span class="lbl" style="left:72px;top:0px;color:#c3ccce"><span class="n" style="letter-spacing: 0.39px;">app.component.spec.ts</span></span></div><div class="a row" style="top:676px;"><span class="a b g" style="left:51px;top:3px;width:16px;height:16px;line-height:16px;font-size:11px;color:#1e88d6;letter-spacing:-0.3px;font-family:'Liberation Sans',sans-serif">TS</span><span class="lbl" style="left:72px;top:0px;color:#c3ccce"><span class="n" style="letter-spacing: 0.5px;">app.component.ts</span></span></div><div class="a row" style="top:698px;"><span class="a b g" style="left:51px;top:3px;width:16px;height:16px;line-height:16px;font-size:11px;color:#1e88d6;letter-spacing:-0.3px;font-family:'Liberation Sans',sans-serif">TS</span><span class="lbl" style="left:72px;top:0px;color:#c3ccce"><span class="n" style="letter-spacing: 0.48px;">app.module.ts</span></span><span class="bd" style="color:#c3ccce"><span class="n b" style="letter-spacing: 1.33px;">M</span></span></div><div class="a row" style="top:720px;"><svg class="a" style="left:23px;top:3px" width="16" height="16" viewBox="0 0 16 16"><path d="M6 3.5l4.5 4.5L6 12.5" fill="none" stroke="#c3ccce" stroke-width="1.1"></path></svg><svg class="a" style="left:43px;top:4px" width="16" height="16" viewBox="0 0 16 16"><path d="M1 4.200c0-.6.400-1 1-1h3.600l1.300 1.400H14c.6 0 1 .4 1 1v7c0 .6-.4 1-1 1H2c-.6 0-1-.4-1-1z" fill="#c0504d"></path><rect x="6.500" y="6.300" width="8" height="7.700" rx=".8" fill="#f3d9d8"></rect><rect x="8.300" y="8" width="4.400" height="4.400" fill="none" stroke="#7a2b29" stroke-width=".9"></rect><circle cx="10.500" cy="10.200" r=".9" fill="#7a2b29"></circle></svg><span class="lbl" style="left:64px;top:0px;color:#c3ccce"><span class="n" style="letter-spacing: 0.07px;">assets</span></span></div><div class="a row" style="top:742px;"><svg class="a" style="left:23px;top:3px" width="16" height="16" viewBox="0 0 16 16"><path d="M3.5 6l4.5 4.5L12.5 6" fill="none" stroke="#c3ccce" stroke-width="1.1"></path></svg><svg class="a" style="left:42px;top:3px" width="16" height="16" viewBox="0 0 16 16"><path d="M1 4.200c0-.6.400-1 1-1h3.600l1.300 1.400H14c.6 0 1 .4 1 1v.4H3.600L1 12.500z" fill="#b8934c"></path><path d="M3.400 6.400H16l-2.300 7.200H1z" fill="#e8c07a"></path></svg><span class="lbl" style="left:64px;top:0px;color:#c3ccce"><span class="n" style="letter-spacing: 0.56px;">environments</span></span><span class="dot" style="margin:0px 0 0 0px"></span></div><div class="a row" style="top:764px;"><span class="a b g" style="left:51px;top:3px;width:16px;height:16px;line-height:16px;font-size:11px;color:#1e88d6;letter-spacing:-0.3px;font-family:'Liberation Sans',sans-serif">TS</span><span class="lbl" style="left:72px;top:0px;color:#c3ccce"><span class="n" style="letter-spacing: 0.55px;">environment.prod.ts</span></span></div><div class="a row" style="top:786px;"><span class="a b g" style="left:51px;top:3px;width:16px;height:16px;line-height:16px;font-size:11px;color:#1e88d6;letter-spacing:-0.3px;font-family:'Liberation Sans',sans-serif">TS</span><span class="lbl" style="left:72px;top:0px;color:#c3ccce"><span class="n" style="letter-spacing: 0.55px;">environment.ts</span></span><span class="bd" style="color:#c3ccce"><span class="n b" style="letter-spacing: 1.33px;">M</span></span></div><div class="a row" style="top:808px;"><svg class="a" style="left:23px;top:3px" width="16" height="16" viewBox="0 0 16 16"><path d="M6 3.5l4.5 4.5L6 12.5" fill="none" stroke="#c3ccce" stroke-width="1.1"></path></svg><svg class="a" style="left:43px;top:4px" width="16" height="16" viewBox="0 0 16 16"><path d="M1 4.200c0-.6.400-1 1-1h3.600l1.300 1.400H14c.6 0 1 .4 1 1v7c0 .6-.4 1-1 1H2c-.6 0-1-.4-1-1z" fill="#c8954a"></path><circle cx="10" cy="10.300" r="4" fill="#f2dcb5"></circle><circle cx="8.300" cy="9.300" r=".9" fill="#e23b3b"></circle><circle cx="10.500" cy="8.300" r=".9" fill="#3b7de2"></circle><circle cx="12" cy="10.300" r=".9" fill="#3bb24a"></circle><circle cx="8.800" cy="12" r=".9" fill="#8e3be2"></circle></svg><span class="lbl" style="left:64px;top:0px;color:#c3ccce"><span class="n" style="letter-spacing: 0.68px;">theme</span></span></div><div class="a row" style="top:830px;"><svg class="a" style="left:41px;top:3px" width="16" height="16" viewBox="0 0 16 16"><path d="M13 4.300c-.3-1.700-3-2-5.300-.8C5.500 4.600 4.300 6.300 5.300 7.500c1 1.200 3 1.400 3.200 2.900.2 1.500-1.700 3-3.400 2.800-1.500-.2-1.800-1.500-.8-2.500 1.200-1.200 3.500-1.700 5.200-1.300 1.300.3 2 1.100 1.800 1.900" fill="none" stroke="#cf649a" stroke-width="1.200" stroke-linecap="round"></path></svg><span class="lbl" style="left:64px;top:0px;color:#c3ccce"><span class="n" style="letter-spacing: 0.18px;">global.scss</span></span></div><div class="a row" style="top:852px;"><svg class="a" style="left:42px;top:3px" width="16" height="16" viewBox="0 0 16 16"><path d="M2.2 1.5h11.6l-1.05 11.6L8 14.6l-4.75-1.5z" fill="#e44d26"></path><path d="M8 2.5v11l3.8-1.2.9-9.8z" fill="#f16529"></path><path d="M5 4.3h6l-.15 1.6H6.7l.1 1.3h3.9l-.35 3.9L8 11.9l-2.4-.8-.15-1.8h1.5l.1.75.95.3.95-.3.1-1.3H5.4z" fill="#fff"></path></svg><span class="lbl" style="left:64px;top:0px;color:#c3ccce"><span class="n" style="letter-spacing: 0.58px;">index.html</span></span></div><div class="a row" style="top:874px;"><span class="a b g" style="left:43px;top:3px;width:16px;height:16px;line-height:16px;font-size:11px;color:#1e88d6;letter-spacing:-0.3px;font-family:'Liberation Sans',sans-serif">TS</span><span class="lbl" style="left:64px;top:0px;color:#c3ccce"><span class="n" style="letter-spacing: 0.48px;">main.ts</span></span></div><div class="a row" style="top:896px;"><span class="a b g" style="left:43px;top:3px;width:16px;height:16px;line-height:16px;font-size:11px;color:#1e88d6;letter-spacing:-0.3px;font-family:'Liberation Sans',sans-serif">TS</span><span class="lbl" style="left:64px;top:0px;color:#c3ccce"><span class="n" style="letter-spacing: 0.39px;">polyfills.ts</span></span></div><div class="a" style="left:44px;top:390px;width:1px;height:132px;background:#4a5a60"></div><div class="a" style="left:36px;top:544px;width:1px;height:44px;background:#4a5a60"></div><div class="a" style="left:0;top:916px;width:256px;height:22px;background:#19313a;border-top:1px solid #20373f"></div><svg class="a" style="left:2px;top:919px" width="16" height="16" viewBox="0 0 16 16"><path d="M6 3.5l4.5 4.5L6 12.5" fill="none" stroke="#d5dcde" stroke-width="1.1"></path></svg><div class="a b" style="left:20px;top:916px;height:22px;line-height:22px;font-size:11px;color:#e3e8e9"><span class="n b" style="letter-spacing: 0.09px;">OUTLINE</span></div><div class="a" style="left:0;top:938px;width:256px;height:22px;background:#19313a;border-top:1px solid #20373f"></div><svg class="a" style="left:2px;top:941px" width="16" height="16" viewBox="0 0 16 16"><path d="M6 3.5l4.5 4.5L6 12.5" fill="none" stroke="#d5dcde" stroke-width="1.1"></path></svg><div class="a b" style="left:20px;top:938px;height:22px;line-height:22px;font-size:11px;color:#e3e8e9"><span class="n b" style="letter-spacing: 0.17px;">TIMELINE</span></div></div><div id="tabs" class="a"><div class="a" style="left:-64px;top:0;height:35px;line-height:33px;color:#93a1a1;width:209px;text-align:left;border-right:1px solid #003a49"><span class="a" style="right:43px;top:0"><span class="n" style="letter-spacing: 0.33px;">tutor-details.page.scss</span></span><span class="a" style="left:171px;top:0"><span class="n b" style="letter-spacing: 0.44px;">U</span></span></div><div class="a" style="left:145px;top:0;width:176px;height:35px;background:#002b37;line-height:33px;color:#e6ecec"><svg class="a" style="left:10px;top:10px" width="16" height="16" viewBox="0 0 16 16"><path d="M2.2 1.5h11.6l-1.05 11.6L8 14.6l-4.75-1.5z" fill="#e44d26"></path><path d="M8 2.5v11l3.8-1.2.9-9.8z" fill="#f16529"></path><path d="M5 4.3h6l-.15 1.6H6.7l.1 1.3h3.9l-.35 3.9L8 11.9l-2.4-.8-.15-1.8h1.5l.1.75.95.3.95-.3.1-1.3H5.4z" fill="#fff"></path></svg><span class="a" style="left:32px;top:0"><span class="n" style="letter-spacing: 0.59px;">tutors.page.html</span></span><span class="a" style="left:139px;top:0;color:#d5dcdc"><span class="n b" style="letter-spacing: 0.44px;">U</span></span><svg class="a" style="left:156px;top:10px" width="16" height="16" viewBox="0 0 16 16"><path d="M3.500 3.500l9 9M12.500 3.500l-9 9" stroke="#e6ecec" stroke-width="1.100"></path></svg></div><div class="a" style="left:322px;top:0;width:192px;height:35px;line-height:33px;color:#93a1a1"><svg class="a" style="left:10px;top:10px" width="16" height="16" viewBox="0 0 16 16"><path d="M1.5 12.500 7.200 2.400c.3-.5.9-.5 1.200 0l2 3.500-3.400 6c-.4.700-1 1.100-1.800 1.100H2.100c-.6 0-.9-.5-.6-.5z" fill="#1e88d6"></path><path d="M9.200 7.400l2.300 4c.4.700.1 1.600-.9 1.600H8.200c-.9 0-1.300-.8-.9-1.500z" fill="#1e88d6"></path><text x="10.200" y="14.800" font-size="6.500" font-weight="bold" fill="#5fb0ea" font-family="Liberation Sans,sans-serif">S</text></svg><span class="a" style="left:32px;top:0"><span class="n" style="letter-spacing: 0.36px;">tutors.page.spec.ts</span></span><span class="a" style="left:154px;top:0"><span class="n b" style="letter-spacing: 0.44px;">U</span></span></div><div class="a" style="left:513px;top:0;width:143px;height:35px;background:#004052;border-left:1px solid #003a4a"></div><svg class="a" style="left:521px;top:10px" width="16" height="16" viewBox="0 0 16 16"><path d="M4 2.500v11l9-5.500z" fill="none" stroke="#c3ccce" stroke-width="1.100" stroke-linejoin="round"></path></svg><svg class="a" style="left:548px;top:10px" width="16" height="16" viewBox="0 0 16 16"><path d="M2.700 5.500A6 6 0 112 8" fill="none" stroke="#c3ccce" stroke-width="1.100"></path><path d="M1.500 2.500l1 3.300 3.300-.8" fill="none" stroke="#c3ccce" stroke-width="1.100"></path><path d="M8 4.500v4l2.500 1.500" fill="none" stroke="#c3ccce" stroke-width="1.100"></path></svg><svg class="a" style="left:574px;top:10px" width="16" height="16" viewBox="0 0 16 16"><circle cx="3.500" cy="3.500" r="1.700" fill="none" stroke="#c3ccce" stroke-width="1"></circle><circle cx="12.500" cy="12.500" r="1.700" fill="none" stroke="#c3ccce" stroke-width="1"></circle><path d="M3.500 5.500v6.500h3M5 10.500l1.700 1.500L5 13.500M12.500 10.500V4h-3M11 5.500L9.300 4 11 2.500" fill="none" stroke="#c3ccce" stroke-width="1"></path></svg><svg class="a" style="left:601px;top:10px" width="16" height="16" viewBox="0 0 16 16"><rect x="1.500" y="2.500" width="13" height="11" rx="1" fill="none" stroke="#c3ccce" stroke-width="1.100"></rect><path d="M8.500 2.500v11" stroke="#c3ccce" stroke-width="1"></path></svg><svg class="a" style="left:627px;top:10px" width="16" height="16" viewBox="0 0 16 16"><circle cx="3" cy="8" r="1.100" fill="#c3ccce"></circle><circle cx="8" cy="8" r="1.100" fill="#c3ccce"></circle><circle cx="13" cy="8" r="1.100" fill="#c3ccce"></circle></svg></div><div id="bc" class="a"><span class="a" style="left:16px;top:0"><span class="n" style="letter-spacing: 0.08px;">src</span></span><span class="a" style="left:50px;top:0"><span class="n" style="letter-spacing: 0.53px;">app</span></span><span class="a" style="left:89px;top:0"><span class="n" style="letter-spacing: 0.28px;">pages</span></span><span class="a" style="left:142px;top:0"><span class="n" style="letter-spacing: 0.73px;">tutors</span></span><svg class="a" style="left:33px;top:3px" width="16" height="16" viewBox="0 0 16 16"><path d="M6 3.500l4.500 4.500L6 12.500" fill="none" stroke="#93a1a1" stroke-width="1"></path></svg><svg class="a" style="left:72px;top:3px" width="16" height="16" viewBox="0 0 16 16"><path d="M6 3.500l4.500 4.500L6 12.500" fill="none" stroke="#93a1a1" stroke-width="1"></path></svg><svg class="a" style="left:125px;top:3px" width="16" height="16" viewBox="0 0 16 16"><path d="M6 3.500l4.500 4.500L6 12.500" fill="none" stroke="#93a1a1" stroke-width="1"></path></svg><svg class="a" style="left:180px;top:3px" width="16" height="16" viewBox="0 0 16 16"><path d="M6 3.500l4.500 4.500L6 12.500" fill="none" stroke="#93a1a1" stroke-width="1"></path></svg><svg class="a" style="left:197px;top:3px" width="16" height="16" viewBox="0 0 16 16"><path d="M2.2 1.5h11.6l-1.05 11.6L8 14.6l-4.75-1.5z" fill="#e44d26"></path><path d="M8 2.5v11l3.8-1.2.9-9.8z" fill="#f16529"></path><path d="M5 4.3h6l-.15 1.6H6.7l.1 1.3h3.9l-.35 3.9L8 11.9l-2.4-.8-.15-1.8h1.5l.1.75.95.3.95-.3.1-1.3H5.4z" fill="#fff"></path></svg><span class="a" style="left:217px;top:0"><span class="n" style="letter-spacing: 0.59px;">tutors.page.html</span></span><svg class="a" style="left:320px;top:3px" width="16" height="16" viewBox="0 0 16 16"><path d="M6 3.500l4.500 4.500L6 12.500" fill="none" stroke="#93a1a1" stroke-width="1"></path></svg><svg class="a" style="left:335px;top:3px" width="16" height="16" viewBox="0 0 16 16"><path d="M1.500 5.700L9.700 2.500l4.800 2v6.300L6.300 14 1.500 12z" fill="none" stroke="#6fb3f2" stroke-width="1" stroke-linejoin="round"></path><path d="M1.500 5.700l4.800 2 8.200-3.200M6.300 7.700V14" fill="none" stroke="#6fb3f2" stroke-width="1" stroke-linejoin="round"></path></svg><span class="a" style="left:354px;top:0"><span class="n" style="letter-spacing: 0.55px;">ion-content</span></span><svg class="a" style="left:425px;top:3px" width="16" height="16" viewBox="0 0 16 16"><path d="M6 3.500l4.500 4.500L6 12.500" fill="none" stroke="#93a1a1" stroke-width="1"></path></svg><svg class="a" style="left:441px;top:3px" width="16" height="16" viewBox="0 0 16 16"><path d="M1.500 5.700L9.700 2.500l4.800 2v6.300L6.300 14 1.500 12z" fill="none" stroke="#6fb3f2" stroke-width="1" stroke-linejoin="round"></path><path d="M1.500 5.700l4.800 2 8.200-3.200M6.300 7.700V14" fill="none" stroke="#6fb3f2" stroke-width="1" stroke-linejoin="round"></path></svg><span class="a" style="left:460px;top:0"><span class="n" style="letter-spacing: 0.44px;">ion-list</span></span><svg class="a" style="left:502px;top:3px" width="16" height="16" viewBox="0 0 16 16"><path d="M6 3.500l4.500 4.500L6 12.500" fill="none" stroke="#93a1a1" stroke-width="1"></path></svg><svg class="a" style="left:517px;top:3px" width="16" height="16" viewBox="0 0 16 16"><path d="M1.500 5.700L9.700 2.500l4.800 2v6.300L6.300 14 1.500 12z" fill="none" stroke="#6fb3f2" stroke-width="1" stroke-linejoin="round"></path><path d="M1.500 5.700l4.800 2 8.200-3.200M6.300 7.700V14" fill="none" stroke="#6fb3f2" stroke-width="1" stroke-linejoin="round"></path></svg><span class="a" style="left:536px;top:0"><span class="n" style="letter-spacing: 0.59px;">ion-item</span></span><svg class="a" style="left:588px;top:3px" width="16" height="16" viewBox="0 0 16 16"><path d="M6 3.500l4.500 4.500L6 12.500" fill="none" stroke="#93a1a1" stroke-width="1"></path></svg><svg class="a" style="left:603px;top:3px" width="16" height="16" viewBox="0 0 16 16"><path d="M1.500 5.700L9.700 2.500l4.800 2v6.300L6.300 14 1.500 12z" fill="none" stroke="#6fb3f2" stroke-width="1" stroke-linejoin="round"></path><path d="M1.500 5.700l4.800 2 8.200-3.200M6.300 7.700V14" fill="none" stroke="#6fb3f2" stroke-width="1" stroke-linejoin="round"></path></svg><span class="a" style="left:622px;top:0"><span class="n" style="letter-spacing: 0.4px;">ion-label</span></span></div><div id="ed" class="a"><div class="a" style="left:70px;top:361px;width:503px;height:19px;background:#073642"></div><div class="a" style="left:70px;top:19px;width:1px;height:57px;background:#3b5058"></div><div class="a" style="left:87px;top:38px;width:1px;height:19px;background:#3b5058"></div><div class="a" style="left:70px;top:133px;width:1px;height:304px;background:#3b5058"></div><div class="a" style="left:87px;top:152px;width:1px;height:19px;background:#3b5058"></div><div class="a" style="left:87px;top:228px;width:1px;height:190px;background:#3b5058"></div><div class="a" style="left:104px;top:247px;width:1px;height:152px;background:#3b5058"></div><div class="a" style="left:121px;top:266px;width:1px;height:19px;background:#3b5058"></div><div class="a" style="left:121px;top:323px;width:1px;height:57px;background:#3b5058"></div><div class="a ln m" style="top:0px;color:#7d9098">1</div><div class="a cl m" style="top:0px"><span class="pu">&lt;</span><span class="tg">ion-header</span> <span class="at">[translucent]</span><span class="at">=</span><span class="st">"true"</span><span class="pu">&gt;</span></div><div class="a ln m" style="top:19px;color:#7d9098">2</div><div class="a cl m" style="top:19px">  <span class="pu">&lt;</span><span class="tg">ion-toolbar</span><span class="pu">&gt;</span></div><div class="a ln m" style="top:38px;color:#7d9098">3</div><div class="a cl m" style="top:38px">    <span class="pu">&lt;</span><span class="tg">ion-title</span><span class="pu">&gt;</span>tutors<span class="pu">&lt;/</span><span class="tg">ion-title</span><span class="pu">&gt;</span></div><div class="a ln m" style="top:57px;color:#7d9098">4</div><div class="a cl m" style="top:57px">  <span class="pu">&lt;/</span><span class="tg">ion-toolbar</span><span class="pu">&gt;</span></div><div class="a ln m" style="top:76px;color:#7d9098">5</div><div class="a cl m" style="top:76px"><span class="pu">&lt;/</span><span class="tg">ion-header</span><span class="pu">&gt;</span></div><div class="a ln m" style="top:95px;color:#7d9098">6</div><div class="a ln m" style="top:114px;color:#7d9098">7</div><div class="a cl m" style="top:114px"><span class="pu">&lt;</span><span class="tg">ion-content</span><span class="pu">&gt;</span></div><div class="a ln m" style="top:133px;color:#7d9098">8</div><div class="a cl m" style="top:133px">  <span class="pu">&lt;</span><span class="tg">div</span> <span class="at">class</span><span class="at">=</span><span class="st">"top-section"</span><span class="pu">&gt;</span></div><div class="a ln m" style="top:152px;color:#7d9098">9</div><div class="a cl m" style="top:152px">    <span class="pu">&lt;</span><span class="tg">button</span> <span class="at">class</span><span class="at">=</span><span class="st">"filter-button"</span><span class="pu">&gt;</span>Select Filter<span class="pu">&lt;/</span><span class="tg">button</span><span class="pu">&gt;</span></div><div class="a ln m" style="top:171px;color:#7d9098">10</div><div class="a cl m" style="top:171px">  <span class="pu">&lt;/</span><span class="tg">div</span><span class="pu">&gt;</span></div><div class="a ln m" style="top:190px;color:#7d9098">11</div><div class="a ln m" style="top:209px;color:#7d9098">12</div><div class="a cl m" style="top:209px">  <span class="pu">&lt;</span><span class="tg">ion-list</span><span class="pu">&gt;</span></div><div class="a ln m" style="top:228px;color:#7d9098">13</div><div class="a cl m" style="top:228px">    <span class="pu">&lt;</span><span class="tg">ion-item</span> <span class="at">button</span> <span class="at">*ngFor</span><span class="at">=</span><span class="st">"let item of tutors"</span><span class="pu">&gt;</span></div><div class="a ln m" style="top:247px;color:#7d9098">14</div><div class="a cl m" style="top:247px">      <span class="pu">&lt;</span><span class="tg">ion-avatar</span> <span class="at">slot</span><span class="at">=</span><span class="st">"start"</span><span class="pu">&gt;</span></div><div class="a ln m" style="top:266px;color:#7d9098">15</div><div class="a cl m" style="top:266px">        <span class="pu">&lt;</span><span class="tg">img</span> <span class="at">[src]</span><span class="at">=</span><span class="st">"item.profileImageURL"</span> <span class="at">alt</span><span class="at">=</span><span class="st">"Tutor Image"</span></div><div class="a ln m" style="top:285px;color:#7d9098">16</div><div class="a cl m" style="top:285px">      <span class="pu">&lt;/</span><span class="tg">ion-avatar</span><span class="pu">&gt;</span></div><div class="a ln m" style="top:304px;color:#7d9098">17</div><div class="a cl m" style="top:304px">      <span class="pu">&lt;</span><span class="tg">ion-label</span><span class="pu">&gt;</span></div><div class="a ln m" style="top:323px;color:#7d9098">18</div><div class="a cl m" style="top:323px">        <span class="pu">&lt;</span><span class="tg">h2</span><span class="pu">&gt;</span>{{ item.name }}<span class="pu">&lt;/</span><span class="tg">h2</span><span class="pu">&gt;</span></div><div class="a ln m" style="top:342px;color:#7d9098">19</div><div class="a cl m" style="top:342px">        <span class="pu">&lt;</span><span class="tg">p</span><span class="pu">&gt;</span>{{ item.professionalExperience }}<span class="pu">&lt;/</span><span class="tg">p</span><span class="pu">&gt;</span></div><div class="a ln m" style="top:361px;color:#c6d0d2">20</div><div class="a cl m" style="top:361px">        <span class="pu">&lt;</span><span class="tg">p</span><span class="pu">&gt;</span>{{ item.qualification }}<span class="pu">&lt;/</span><span class="tg">p</span><span class="pu">&gt;</span></div><div class="a ln m" style="top:380px;color:#7d9098">21</div><div class="a cl m" style="top:380px">      <span class="pu">&lt;/</span><span class="tg">ion-label</span><span class="pu">&gt;</span></div><div class="a ln m" style="top:399px;color:#7d9098">22</div><div class="a cl m" style="top:399px">    <span class="pu">&lt;/</span><span class="tg">ion-item</span><span class="pu">&gt;</span></div><div class="a ln m" style="top:418px;color:#7d9098">23</div><div class="a cl m" style="top:418px">  <span class="pu">&lt;/</span><span class="tg">ion-list</span><span class="pu">&gt;</span></div><div class="a ln m" style="top:437px;color:#7d9098">24</div><div class="a cl m" style="top:437px"><span class="pu">&lt;/</span><span class="tg">ion-content</span><span class="pu">&gt;</span></div><div class="a ln m" style="top:456px;color:#5c727a">25</div><div class="a" style="left:569px;top:0;width:5px;height:551px;background:linear-gradient(90deg,rgba(0,20,26,0),rgba(0,20,26,.75))"></div><div class="a" style="left:574px;top:0;width:69px;height:551px;background:#002b36"></div><div class="a" style="left:582.0px;top:0px;width:24.1px;height:2px;background:#2a8fd8;opacity:.33"></div><div class="a" style="left:583.5px;top:2px;width:9.5px;height:2px;background:#2a8fd8;opacity:.33"></div><div class="a" style="left:584.9px;top:4px;width:21.2px;height:2px;background:#2a8fd8;opacity:.33"></div><div class="a" style="left:583.5px;top:6px;width:10.2px;height:2px;background:#2a8fd8;opacity:.33"></div><div class="a" style="left:582.0px;top:8px;width:9.5px;height:2px;background:#2a8fd8;opacity:.33"></div><div class="a" style="left:582.0px;top:12px;width:9.5px;height:2px;background:#2a8fd8;opacity:.33"></div><div class="a" style="left:583.5px;top:14px;width:18.2px;height:2px;background:#2a8fd8;opacity:.33"></div><div class="a" style="left:584.9px;top:16px;width:38.0px;height:2px;background:#2a8fd8;opacity:.33"></div><div class="a" style="left:583.5px;top:18px;width:4.4px;height:2px;background:#2a8fd8;opacity:.33"></div><div class="a" style="left:583.5px;top:22px;width:7.3px;height:2px;background:#2a8fd8;opacity:.33"></div><div class="a" style="left:584.9px;top:24px;width:32.9px;height:2px;background:#2a8fd8;opacity:.33"></div><div class="a" style="left:586.4px;top:26px;width:18.2px;height:2px;background:#2a8fd8;opacity:.33"></div><div class="a" style="left:587.8px;top:28px;width:37.2px;height:2px;background:#2a8fd8;opacity:.33"></div><div class="a" style="left:586.4px;top:30px;width:9.5px;height:2px;background:#2a8fd8;opacity:.33"></div><div class="a" style="left:586.4px;top:32px;width:8.0px;height:2px;background:#2a8fd8;opacity:.33"></div><div class="a" style="left:587.8px;top:34px;width:17.5px;height:2px;background:#2a8fd8;opacity:.33"></div><div class="a" style="left:587.8px;top:36px;width:29.2px;height:2px;background:#2a8fd8;opacity:.33"></div><div class="a" style="left:587.8px;top:38px;width:22.6px;height:2px;background:#2a8fd8;opacity:.33"></div><div class="a" style="left:586.4px;top:40px;width:8.8px;height:2px;background:#2a8fd8;opacity:.33"></div><div class="a" style="left:584.9px;top:42px;width:8.0px;height:2px;background:#2a8fd8;opacity:.33"></div><div class="a" style="left:583.5px;top:44px;width:8.0px;height:2px;background:#2a8fd8;opacity:.33"></div><div class="a" style="left:582.0px;top:46px;width:10.2px;height:2px;background:#2a8fd8;opacity:.33"></div><div class="a" style="left:642px;top:0;width:1px;height:551px;background:#24434b"></div><div class="a" style="left:643px;top:0;width:13px;height:551px;background:#002b36"></div><div class="a" style="left:643px;top:0;width:13px;height:300px;background:#0a343f"></div><div class="a" style="left:643px;top:196px;width:13px;height:2px;background:#c0202a"></div><div class="a" style="left:70px;top:539px;width:458px;height:12px;background:#09333e"></div></div><div id="pnl" class="a"><span class="a" style="left:20px;top:6px;height:22px;line-height:22px;font-size:11px;color:#93a1a1"><span class="n" style="letter-spacing: -0.5px;">PROBLEMS</span></span><span class="a" style="left:101px;top:6px;height:22px;line-height:22px;font-size:11px;color:#93a1a1"><span class="n" style="letter-spacing: -0.28px;">OUTPUT</span></span><span class="a" style="left:169px;top:6px;height:22px;line-height:22px;font-size:11px;color:#e6ecec"><span class="n" style="letter-spacing: -0.21px;">TERMINAL</span></span><span class="a" style="left:246px;top:6px;height:22px;line-height:22px;font-size:11px;color:#93a1a1"><span class="n" style="letter-spacing: -0.43px;">DEBUG CONSOLE</span></span><div class="a" style="left:167px;top:30px;width:58px;height:1px;background:#e6ecec"></div><svg class="a" style="left:438px;top:10px" width="16" height="16" viewBox="0 0 16 16"><rect x="1.500" y="2.500" width="13" height="11" rx="1" fill="none" stroke="#c3ccce" stroke-width="1"></rect><path d="M5 5.500l3 2.500-3 2.500" fill="none" stroke="#c3ccce" stroke-width="1"></path></svg><span class="a" style="left:458px;top:7px;height:22px;line-height:22px;font-size:12px;color:#b0bbbe"><span class="n" style="letter-spacing: 0.72px;">ng</span></span><svg class="a" style="left:481px;top:10px" width="16" height="16" viewBox="0 0 16 16"><path d="M8.500 2.500v12M2.500 8.500h12" stroke="#c3ccce" stroke-width="1"></path></svg><svg class="a" style="left:499px;top:12px" width="12" height="12" viewBox="0 0 12 12"><path d="M2.500 4.500l3.500 3.500 3.500-3.500" fill="none" stroke="#c3ccce" stroke-width="1"></path></svg><svg class="a" style="left:521px;top:10px" width="16" height="16" viewBox="0 0 16 16"><rect x="1.500" y="2.500" width="13" height="11" rx="1" fill="none" stroke="#c3ccce" stroke-width="1"></rect><path d="M8.500 2.500v11" stroke="#c3ccce" stroke-width="1"></path></svg><svg class="a" style="left:546px;top:10px" width="16" height="16" viewBox="0 0 16 16"><path d="M2.500 4.500h11M6 4.500v-2h4v2M3.500 4.500l.7 9.500h7.600l.7-9.500M6.500 6.500v6M9.500 6.500v6" fill="none" stroke="#c3ccce" stroke-width="1"></path></svg><svg class="a" style="left:573px;top:10px" width="16" height="16" viewBox="0 0 16 16"><circle cx="3" cy="8" r="1.100" fill="#c3ccce"></circle><circle cx="8" cy="8" r="1.100" fill="#c3ccce"></circle><circle cx="13" cy="8" r="1.100" fill="#c3ccce"></circle></svg><svg class="a" style="left:599px;top:10px" width="16" height="16" viewBox="0 0 16 16"><path d="M3 10l5-5 5 5" fill="none" stroke="#c3ccce" stroke-width="1.100"></path></svg><svg class="a" style="left:625px;top:10px" width="16" height="16" viewBox="0 0 16 16"><path d="M3.500 3.500l9 9M12.500 3.500l-9 9" stroke="#c3ccce" stroke-width="1.100"></path></svg><div class="a tl m" style="top:62px"><span class="tbold">Initial Chunk Files</span>                                    <span class="dim">| </span><span class="tbold">Names</span></div><div class="a tl m" style="top:78px">                     <span class="dim">| </span><span class="tbold">Raw Size</span></div><div class="a tl m" style="top:94px"><span class="dim">runtime.js</span>                                             <span class="dim">| </span>runtime</div><div class="a tl m" style="top:110px">                     <span class="dim">| 14.11 kB | </span></div><div class="a tl m" style="top:142px"><span class="tbold">Lazy Chunk Files</span>                                       <span class="dim">| </span><span class="tbold">Names</span></div><div class="a tl m" style="top:158px">                     <span class="dim">| </span><span class="tbold">Raw Size</span></div><div class="a tl m" style="top:174px"><span class="dim">src_app_pages_tutors_tutors_module_ts.js</span>               <span class="dim">| </span>pages-tutors-tutors-</div><div class="a tl m" style="top:190px">module               <span class="dim">| 18.29 kB | </span></div><div class="a tl m" style="top:206px"><span class="dim">src_app_pages_tutor-details_tutor-details_module_ts.js</span> <span class="dim">| </span>pages-tutor-details-</div><div class="a tl m" style="top:222px">tutor-details-module <span class="dim">|  8.78 kB | </span></div><div class="a tl m" style="top:254px">59 unchanged chunks</div><div class="a tl m" style="top:286px">Build at: <span class="tbold">2023-08-27T20:17:10.409Z</span> - Hash: <span class="tbold">4850fd2ba148b489</span> - Time: <span class="tbold">2965</span>ms</div><div class="a tl m" style="top:318px">✔ Compiled successfully.</div><div class="a" style="left:20px;top:333px;width:8px;height:16px;border:1px solid #c3ccce"></div><div class="a" style="left:646px;top:247px;width:4px;height:8px;background:#5c7d88"></div></div><div id="status" class="a"><div class="a" style="left:0;top:0;width:34px;height:22px;background:#1a6d6d"></div><svg class="a" style="left:9px;top:3px" width="16" height="16" viewBox="0 0 16 16"><path d="M3 5.500l3.500 3.500L3 12.500M13 3.500l-3.500 3.500L13 10.500" fill="none" stroke="#e8f0f0" stroke-width="1" transform="rotate(-10 8 8)"></path></svg><svg class="a" style="left:42px;top:3px" width="14" height="16" viewBox="0 0 14 16"><circle cx="4" cy="3.500" r="1.600" fill="none" stroke="#a0adb0" stroke-width="1"></circle><circle cx="4" cy="12.500" r="1.600" fill="none" stroke="#a0adb0" stroke-width="1"></circle><circle cx="10.500" cy="5.500" r="1.600" fill="none" stroke="#a0adb0" stroke-width="1"></circle><path d="M4 5v6M10.500 7c0 2.500-3 2.500-6 3.500" fill="none" stroke="#a0adb0" stroke-width="1"></path></svg><span class="a" style="left:59px;top:0"><span class="n" style="letter-spacing: 0.72px;">master*</span></span><svg class="a" style="left:121px;top:4px" width="16" height="16" viewBox="0 0 16 16"><path d="M4 11.500a2.800 2.800 0 01.300-5.600 4 4 0 017.700.600 2.500 2.500 0 01-.200 5" fill="none" stroke="#a0adb0" stroke-width="1"></path><path d="M8 13.500v-5M6 10l2-2 2 2" fill="none" stroke="#a0adb0" stroke-width="1"></path></svg><svg class="a" style="left:151px;top:4px" width="16" height="16" viewBox="0 0 16 16"><circle cx="8" cy="8" r="5.500" fill="none" stroke="#a0adb0" stroke-width="1"></circle><path d="M5.800 5.800l4.400 4.400M10.200 5.800l-4.400 4.400" stroke="#a0adb0" stroke-width="1"></path></svg><span class="a" style="left:168px;top:0"><span class="n" style="letter-spacing: 0.19px;">0</span></span><svg class="a" style="left:178px;top:4px" width="16" height="16" viewBox="0 0 16 16"><path d="M8 2.500l6 11H2z" fill="none" stroke="#a0adb0" stroke-width="1" stroke-linejoin="round"></path><path d="M8 6.500v3.500M8 11.300v1" stroke="#a0adb0" stroke-width="1"></path></svg><span class="a" style="left:195px;top:0"><span class="n" style="letter-spacing: 0.19px;">0</span></span><span class="a" style="left:218px;top:0"><span class="n" style="letter-spacing: 0.23px;">Blackbox</span></span><span class="a" style="left:289px;top:0"><span class="n" style="letter-spacing: 0.02px;">Ln 20, Col 33</span></span><span class="a" style="left:377px;top:0"><span class="n" style="letter-spacing: -0.13px;">Spaces: 2</span></span><span class="a" style="left:446px;top:0"><span class="n" style="letter-spacing: -0.32px;">UTF-8</span></span><span class="a" style="left:494px;top:0"><span class="n" style="letter-spacing: -0.74px;">LF</span></span><span class="a" style="left:541px;top:0"><span class="n" style="letter-spacing: 0.02px;">HTML</span></span><span class="a" style="left:606px;top:0"><span class="n">Go Live</span></span><span class="a" style="left:664px;top:0"><span class="n" style="letter-spacing: 0.23px;">Blackbox</span></span><span class="a" style="left:730px;top:0"><span class="n" style="letter-spacing: 0.38px;">Prettier+</span></span><span class="a" style="left:813px;top:0"><span class="n" style="letter-spacing: 0.44px;">Prettier</span></span><span class="a" style="left:521px;top:0;font-size:11px"><span class="n" style="letter-spacing: 0.28px;">{ }</span></span><svg class="a" style="left:530px;top:13px" width="6" height="6" viewBox="0 0 6 6"><circle cx="3" cy="3" r="2.600" fill="#a0adb0"></circle><path d="M2 2l2 2M4 2l-2 2" stroke="#00212b" stroke-width=".8"></path></svg><svg class="a" style="left:590px;top:3px" width="14" height="16" viewBox="0 0 14 16"><circle cx="7" cy="7" r="1.700" fill="#a0adb0"></circle><path d="M4.300 10a4 4 0 115.400 0M2.800 12a6.300 6.300 0 118.400 0M7 8.500v6.500" fill="none" stroke="#a0adb0" stroke-width="1"></path></svg><svg class="a" style="left:796px;top:4px" width="16" height="16" viewBox="0 0 16 16"><path d="M1.500 9l2.500 3 5.500-7.500M6.500 10.500l1.300 1.500 5.700-7.500" fill="none" stroke="#a0adb0" stroke-width="1"></path></svg><svg class="a" style="left:871px;top:4px" width="16" height="16" viewBox="0 0 16 16"><circle cx="6" cy="5" r="2.200" fill="none" stroke="#a0adb0" stroke-width="1"></circle><path d="M1.500 13c.5-3 2.500-4 4.500-4s3 .5 3.800 1.500" fill="none" stroke="#a0adb0" stroke-width="1"></path><path d="M9 3.500h5.500v5h-2l-1.500 1.500v-1.500" fill="none" stroke="#a0adb0" stroke-width="1"></path></svg><svg class="a" style="left:900px;top:4px" width="16" height="16" viewBox="0 0 16 16"><path d="M2.500 13.500v-11h7l3 3v3M9.500 2.500v3h3" fill="none" stroke="#a0adb0" stroke-width="1"></path><rect x="7.500" y="9.500" width="6" height="4.500" fill="none" stroke="#a0adb0" stroke-width="1"></rect><path d="M9 9.500v-1a1.500 1.500 0 013 0v1" fill="none" stroke="#a0adb0" stroke-width="1"></path></svg><svg class="a" style="left:930px;top:4px" width="16" height="16" viewBox="0 0 16 16"><path d="M8 2.500c-2.500 0-4 1.800-4 4v3L2.500 12h11L12 9.500v-3" fill="none" stroke="#a0adb0" stroke-width="1"></path><path d="M6.500 13.500a1.500 1.500 0 003 0" fill="none" stroke="#a0adb0" stroke-width="1"></path><circle cx="12" cy="4" r="2.300" fill="#a0adb0"></circle></svg></div><div class="a tb" style="left:960px;width:960px;background:#2f313b"><div class="a tbt" style="color:#dcdde0"><span class="n" style="letter-spacing: 0.18px;">Ionic App - Google Chrome</span></div><div class="a" style="left:0;top:0;width:1px;height:36px;background:#24262e"></div><svg class="a" style="left:876px;top:12px" width="12" height="12" viewBox="0 0 12 12"><path d="M2 6h8" stroke="#c9cbcf" stroke-width="1"></path></svg><svg class="a" style="left:906px;top:12px" width="12" height="12" viewBox="0 0 12 12"><rect x="2" y="2" width="8" height="8" fill="none" stroke="#c9cbcf" stroke-width="1"></rect></svg><svg class="a" style="left:936px;top:12px" width="12" height="12" viewBox="0 0 12 12"><path d="M2 2l8 8M10 2l-8 8" stroke="#c9cbcf" stroke-width="1"></path></svg></div><div id="ctabs" class="a"><svg class="a" style="left:20.0px;top:9px" width="16" height="16" viewBox="0 0 16 16"><circle cx="8" cy="8" r="7.300" fill="#e8eaed"></circle><path d="M5.500 2.300c1 1 2.500.700 2.700 2 .200 1.300-1.700 1.200-2 2.400-.300 1.200 1 1.600.800 2.800-.200 1-1.500 1.200-2.500.800L2.300 7.500C2.500 5 3.700 3.200 5.500 2.300zM10.500 8.500c1-.5 2.200.200 2.600 1.200.3 1-.5 2.300-1.700 2.600-1 .300-1.400-.800-1.500-1.800-.1-.8-.1-1.600.6-2zM9.800 1.400c1.200.200 2.300.900 3 1.800-.9.300-1.800.600-2.400 0-.5-.5-.8-1.200-.6-1.800z" fill="#202124"></path></svg><div class="a" style="left:44.0px;top:0;width:52px;height:34px;line-height:33px;font-size:14.67px;color:#e8eaed;overflow:hidden"><span class="n" style="letter-spacing: 0.04px;">Elevate</span><div class="a" style="right:0;top:0;width:16px;height:34px;background:linear-gradient(90deg,rgba(0,0,0,0),#000)"></div></div><svg class="a" style="left:107.0px;top:12px" width="10" height="10" viewBox="0 0 10 10"><path d="M1.500 1.500l7 7M8.500 1.500l-7 7" stroke="#e8eaed" stroke-width="1.500"></path></svg><div class="a" style="left:127.0px;top:7px;width:1px;height:20px;background:#5f6368"></div><svg class="a" style="left:138.6px;top:9px" width="16" height="16" viewBox="0 0 16 16"><circle cx="8" cy="8" r="7.300" fill="#e8eaed"></circle><path d="M5.500 2.300c1 1 2.500.700 2.700 2 .200 1.300-1.700 1.200-2 2.400-.300 1.200 1 1.600.800 2.800-.200 1-1.500 1.200-2.500.800L2.300 7.500C2.500 5 3.700 3.200 5.500 2.300zM10.500 8.500c1-.5 2.200.200 2.600 1.200.3 1-.5 2.300-1.700 2.600-1 .300-1.400-.800-1.500-1.800-.1-.8-.1-1.600.6-2zM9.800 1.400c1.200.200 2.300.900 3 1.800-.9.300-1.800.600-2.400 0-.5-.5-.8-1.200-.6-1.800z" fill="#202124"></path></svg><div class="a" style="left:162.6px;top:0;width:52px;height:34px;line-height:33px;font-size:14.67px;color:#e8eaed;overflow:hidden"><span class="n" style="letter-spacing: 0.04px;">Elevate</span><div class="a" style="right:0;top:0;width:16px;height:34px;background:linear-gradient(90deg,rgba(0,0,0,0),#000)"></div></div><svg class="a" style="left:225.6px;top:12px" width="10" height="10" viewBox="0 0 10 10"><path d="M1.500 1.500l7 7M8.500 1.500l-7 7" stroke="#e8eaed" stroke-width="1.500"></path></svg><div class="a" style="left:245.6px;top:7px;width:1px;height:20px;background:#5f6368"></div><svg class="a" style="left:257.2px;top:9px" width="16" height="16" viewBox="0 0 16 16"><circle cx="8" cy="8" r="7.300" fill="#e8eaed"></circle><path d="M5.500 2.300c1 1 2.500.700 2.700 2 .200 1.300-1.700 1.200-2 2.400-.300 1.200 1 1.600.800 2.800-.200 1-1.500 1.200-2.500.800L2.300 7.500C2.500 5 3.700 3.200 5.500 2.300zM10.500 8.500c1-.5 2.200.200 2.600 1.200.3 1-.5 2.300-1.700 2.600-1 .300-1.400-.800-1.500-1.800-.1-.8-.1-1.600.6-2zM9.800 1.400c1.200.200 2.300.900 3 1.800-.9.300-1.800.600-2.400 0-.5-.5-.8-1.200-.6-1.800z" fill="#202124"></path></svg><div class="a" style="left:281.2px;top:0;width:52px;height:34px;line-height:33px;font-size:14.67px;color:#e8eaed;overflow:hidden"><span class="n" style="letter-spacing: 0.48px;">Inspect</span><div class="a" style="right:0;top:0;width:16px;height:34px;background:linear-gradient(90deg,rgba(0,0,0,0),#000)"></div></div><svg class="a" style="left:344.2px;top:12px" width="10" height="10" viewBox="0 0 10 10"><path d="M1.500 1.500l7 7M8.500 1.500l-7 7" stroke="#e8eaed" stroke-width="1.500"></path></svg><div class="a" style="left:364.2px;top:7px;width:1px;height:20px;background:#5f6368"></div><svg class="a" style="left:375.8px;top:9px" width="16" height="16" viewBox="0 0 16 16"><path d="M15.500 8.200c0-.5 0-1-.1-1.500H8v3h4.200a3.600 3.600 0 01-1.600 2.400l2.500 2c1.500-1.400 2.400-3.400 2.400-5.900z" fill="#4285f4"></path><path d="M8 16c2.100 0 3.900-.7 5.200-1.900l-2.500-2c-.7.500-1.600.8-2.700.8-2 0-3.800-1.400-4.400-3.300L1 11.600A8 8 0 008 16z" fill="#34a853"></path><path d="M3.600 9.600a4.800 4.800 0 010-3.100L1 4.500a8 8 0 000 7.100z" fill="#fbbc05"></path><path d="M8 3.200c1.200 0 2.200.4 3 1.200l2.300-2.200A8 8 0 001 4.500l2.600 2C4.200 4.600 6 3.200 8 3.200z" fill="#ea4335"></path></svg><div class="a" style="left:399.8px;top:0;width:52px;height:34px;line-height:33px;font-size:14.67px;color:#e8eaed;overflow:hidden"><span class="n" style="letter-spacing: 0.66px;">how to</span><div class="a" style="right:0;top:0;width:16px;height:34px;background:linear-gradient(90deg,rgba(0,0,0,0),#000)"></div></div><svg class="a" style="left:462.8px;top:12px" width="10" height="10" viewBox="0 0 10 10"><path d="M1.500 1.500l7 7M8.500 1.500l-7 7" stroke="#e8eaed" stroke-width="1.500"></path></svg><div class="a" style="left:482.8px;top:7px;width:1px;height:20px;background:#5f6368"></div><svg class="a" style="left:494.4px;top:9px" width="16" height="16" viewBox="0 0 16 16"><circle cx="8" cy="8" r="7.500" fill="#3880ff"></circle><circle cx="8" cy="8" r="4.600" fill="none" stroke="#fff" stroke-width="1.300"></circle><circle cx="8" cy="8" r="2" fill="#fff"></circle><circle cx="12.300" cy="3.900" r="1.200" fill="#fff"></circle></svg><div class="a" style="left:518.4px;top:0;width:52px;height:34px;line-height:33px;font-size:14.67px;color:#e8eaed;overflow:hidden"><span class="n" style="letter-spacing: 0.17px;">Preview</span><div class="a" style="right:0;top:0;width:16px;height:34px;background:linear-gradient(90deg,rgba(0,0,0,0),#000)"></div></div><svg class="a" style="left:581.4px;top:12px" width="10" height="10" viewBox="0 0 10 10"><path d="M1.500 1.500l7 7M8.500 1.500l-7 7" stroke="#e8eaed" stroke-width="1.500"></path></svg><div class="a" style="left:601.4px;top:7px;width:1px;height:20px;background:#5f6368"></div><svg class="a" style="left:613.0px;top:9px" width="16" height="16" viewBox="0 0 16 16"><circle cx="8" cy="8" r="8" fill="#1a3cff"></circle><text x="8" y="11.600" font-size="9.500" font-weight="bold" fill="#fff" text-anchor="middle" font-family="Liberation Sans,sans-serif">A</text></svg><div class="a" style="left:637.0px;top:0;width:52px;height:34px;line-height:33px;font-size:14.67px;color:#e8eaed;overflow:hidden"><span class="n" style="letter-spacing: 0.59px;">Appflow</span><div class="a" style="right:0;top:0;width:16px;height:34px;background:linear-gradient(90deg,rgba(0,0,0,0),#000)"></div></div><svg class="a" style="left:700.0px;top:12px" width="10" height="10" viewBox="0 0 10 10"><path d="M1.500 1.500l7 7M8.500 1.500l-7 7" stroke="#e8eaed" stroke-width="1.500"></path></svg><div class="a" style="left:719px;top:0;width:119px;height:34px;background:#353638;border-radius:9px 9px 0 0"></div><svg class="a" style="left:711px;top:26px" width="8" height="8" viewBox="0 0 8 8"><path d="M8 0v8H0a8 8 0 008-8z" fill="#353638"></path></svg><svg class="a" style="left:838px;top:26px" width="8" height="8" viewBox="0 0 8 8"><path d="M0 0v8h8a8 8 0 01-8-8z" fill="#353638"></path></svg><svg class="a" style="left:730px;top:9px" width="16" height="16" viewBox="0 0 16 16"><circle cx="8" cy="8" r="6.600" fill="none" stroke="#4d8dff" stroke-width="1.400"></circle><circle cx="8" cy="8" r="3.300" fill="#4d8dff"></circle><circle cx="13.300" cy="2.800" r="1.500" fill="#4d8dff" stroke="#353638" stroke-width=".6"></circle></svg><div class="a" style="left:754px;top:0;width:52px;height:34px;line-height:33px;font-size:14.67px;color:#e8eaed;overflow:hidden"><span class="n" style="letter-spacing: 0.51px;">Ionic App</span><div class="a" style="right:0;top:0;width:18px;height:34px;background:linear-gradient(90deg,rgba(51,52,56,0),#353638)"></div></div><svg class="a" style="left:817px;top:12px" width="10" height="10" viewBox="0 0 10 10"><path d="M1.500 1.500l7 7M8.500 1.500l-7 7" stroke="#e8eaed" stroke-width="1.500"></path></svg><svg class="a" style="left:854px;top:11px" width="12" height="12" viewBox="0 0 12 12"><path d="M6 0v12M0 6h12" stroke="#e8eaed" stroke-width="1.600"></path></svg><svg class="a" style="left:932px;top:13px" width="10" height="8" viewBox="0 0 10 8"><path d="M1 1.500l4 4 4-4" fill="none" stroke="#e8eaed" stroke-width="1.500"></path></svg></div><div id="ctool" class="a"><svg class="a" style="left:13px;top:13px" width="16" height="16" viewBox="0 0 16 16"><path d="M15 8H2M8 1.500L1.500 8 8 14.500" fill="none" stroke="#e8eaed" stroke-width="1.900"></path></svg><svg class="a" style="left:46px;top:13px" width="16" height="16" viewBox="0 0 16 16"><path d="M1 8h13M8 1.500L14.500 8 8 14.500" fill="none" stroke="#7d8084" stroke-width="1.900"></path></svg><svg class="a" style="left:78px;top:12px" width="16" height="17" viewBox="0 0 16 17"><path d="M13.500 8.500a5.800 5.800 0 11-1.700-4.100" fill="none" stroke="#e8eaed" stroke-width="1.900"></path><path d="M14.300 1v5.500H8.800z" fill="#e8eaed"></path></svg><div class="a" style="left:108px;top:4px;width:631px;height:34px;border-radius:17px;background:#202124"></div><svg class="a" style="left:118px;top:14px" width="14" height="14" viewBox="0 0 14 14"><circle cx="7" cy="7" r="6" fill="none" stroke="#c4c7c5" stroke-width="1.300"></circle><path d="M7 6v4.500M7 3.500v1.300" stroke="#c4c7c5" stroke-width="1.400"></path></svg><div class="a" style="left:142px;top:4px;height:34px;line-height:33px;font-size:14.100px;color:#e8eaed"><span class="n" style="letter-spacing: 0.44px;">localhost</span><span style="color:#9aa0a6"><span class="n" style="letter-spacing: 0.57px;">:8100/tutors</span></span></div><svg class="a" style="left:648px;top:13px" width="16" height="16" viewBox="0 0 16 16"><circle cx="6.500" cy="6.500" r="4.800" fill="none" stroke="#c4c7c5" stroke-width="1.500"></circle><path d="M10 10l4.500 4.500M4.500 6.500h4M6.500 4.500v4" stroke="#c4c7c5" stroke-width="1.500"></path></svg><svg class="a" style="left:680px;top:13px" width="16" height="16" viewBox="0 0 16 16"><circle cx="12" cy="3" r="2" fill="#c4c7c5"></circle><circle cx="12" cy="13" r="2" fill="#c4c7c5"></circle><circle cx="3.500" cy="8" r="2" fill="#c4c7c5"></circle><path d="M12 3L3.500 8 12 13" fill="none" stroke="#c4c7c5" stroke-width="1.300"></path></svg><svg class="a" style="left:713px;top:12px" width="16" height="16" viewBox="0 0 16 16"><path d="M8 1.500l2 4.500 4.800.5-3.600 3.200 1 4.800L8 12l-4.200 2.500 1-4.800L1.200 6.500 6 6z" fill="none" stroke="#c4c7c5" stroke-width="1.400" stroke-linejoin="round"></path></svg><svg class="a" style="left:754px;top:14px" width="14" height="14" viewBox="0 0 14 14"><rect width="14" height="14" fill="#fff"></rect><rect x="2" y="2" width="7" height="10" fill="#353638"></rect></svg><div class="a" style="left:779px;top:7px;width:84px;height:29px;border-radius:14.500px;background:#3b3f48;border:1px solid #7aa7f5"></div><div class="a" style="left:782px;top:10px;width:23px;height:23px;border-radius:12px;background:#5230a8;overflow:hidden"><div class="a" style="left:7px;top:3px;width:9px;height:9px;border-radius:5px;background:#36e06c"></div><div class="a" style="left:6px;top:11px;width:11px;height:12px;border-radius:5px;background:#36e06c"></div><div class="a" style="left:8px;top:15px;width:6px;height:6px;border-radius:3px;background:#c8f03c"></div></div><div class="a" style="left:812px;top:7px;height:29px;line-height:28px;font-size:12.100px;color:#8ab4f8"><span class="n" style="letter-spacing: 0.1px;">Paused</span></div><div class="a" style="left:870px;top:7px;width:79px;height:29px;border-radius:14.500px;background:#443b3b;border:1px solid #e8a09a"></div><div class="a" style="left:881px;top:7px;height:29px;line-height:28px;font-size:12.100px;color:#f2a59e"><span class="n" style="letter-spacing: 0.45px;">Update</span></div><svg class="a" style="left:936px;top:14px" width="4" height="16" viewBox="0 0 4 16"><circle cx="2" cy="2.500" r="1.500" fill="#f2a59e"></circle><circle cx="2" cy="8" r="1.500" fill="#f2a59e"></circle><circle cx="2" cy="13.500" r="1.500" fill="#f2a59e"></circle></svg></div><div id="cbm" class="a"><svg class="a" style="left:14px;top:9px" width="15" height="15" viewBox="0 0 15 15"><rect x="0.0" y="0.0" width="3.200" height="3.200" fill="#ea4335"></rect><rect x="5.5" y="0.0" width="3.200" height="3.200" fill="#ea4335"></rect><rect x="11.0" y="0.0" width="3.200" height="3.200" fill="#ea4335"></rect><rect x="0.0" y="5.5" width="3.200" height="3.200" fill="#34a853"></rect><rect x="5.5" y="5.5" width="3.200" height="3.200" fill="#fbbc05"></rect><rect x="11.0" y="5.5" width="3.200" height="3.200" fill="#fbbc05"></rect><rect x="0.0" y="11.0" width="3.200" height="3.200" fill="#4285f4"></rect><rect x="5.5" y="11.0" width="3.200" height="3.200" fill="#34a853"></rect><rect x="11.0" y="11.0" width="3.200" height="3.200" fill="#4285f4"></rect></svg><span class="a" style="left:38px;top:0"><span class="n" style="letter-spacing: 0.25px;">Apps</span></span><svg class="a" style="left:89px;top:9px" width="15" height="15" viewBox="0 0 15 15"><path d="M6.200 0h2.600l.4 2 1.300.6 1.700-1.100 1.800 1.800-1.100 1.700.6 1.300 2 .4v2.600l-2 .4-.6 1.300 1.100 1.700-1.800 1.800-1.700-1.100-1.300.6-.4 2H6.200l-.4-2-1.300-.6-1.700 1.100L1 12.700l1.100-1.700-.6-1.300-2-.4V6.700l2-.4.6-1.300L1 3.300l1.800-1.800 1.700 1.100 1.300-.6z" fill="#e8eaed"></path><circle cx="7.500" cy="7.500" r="2.400" fill="#353638"></circle></svg><span class="a" style="left:113px;top:0"><span class="n" style="letter-spacing: 0.35px;">Settings</span></span><svg class="a" style="left:184px;top:8px" width="16" height="17" viewBox="0 0 16 17"><rect width="16" height="17" fill="#fff"></rect><circle cx="8" cy="8.500" r="6.500" fill="none" stroke="#2a3a9c" stroke-width="1.400"></circle><circle cx="8" cy="8.500" r="3.800" fill="#5fa8e8"></circle><circle cx="8" cy="8.500" r="1.600" fill="#2a3a9c"></circle></svg><span class="a" style="left:208px;top:0"><span class="n" style="letter-spacing: -0.5px;">WELCOME TO...</span></span><svg class="a" style="left:333px;top:9px" width="16" height="16" viewBox="0 0 16 16"><circle cx="8" cy="8" r="7.300" fill="#e8eaed"></circle><path d="M5.500 2.300c1 1 2.500.700 2.700 2 .200 1.300-1.700 1.200-2 2.400-.300 1.200 1 1.600.800 2.800-.200 1-1.500 1.200-2.500.800L2.300 7.500C2.500 5 3.700 3.200 5.500 2.300zM10.500 8.500c1-.5 2.200.200 2.600 1.200.3 1-.5 2.300-1.700 2.600-1 .300-1.400-.800-1.500-1.800-.1-.8-.1-1.600.6-2zM9.800 1.400c1.200.200 2.300.900 3 1.800-.9.300-1.800.600-2.400 0-.5-.5-.8-1.200-.6-1.800z" fill="#202124"></path></svg><span class="a" style="left:357px;top:0"><span class="n" style="letter-spacing: 0.25px;">Welcome to H...</span></span><svg class="a" style="left:482px;top:8px" width="16" height="17" viewBox="0 0 16 17"><rect y="1" width="16" height="16" fill="#f4f4f4"></rect><circle cx="8" cy="1.500" r="1.600" fill="#c0392b"></circle><path d="M3 5.500h10M10 5.500v2.500c0 1.500-4.500 1-4.500 2.800 0 1.700 4.500 1.200 4.500 3 0 1.200-2 1.700-5.500 1.400" fill="none" stroke="#8a8a8a" stroke-width="1.500"></path></svg><span class="a" style="left:506px;top:0"><span class="n" style="letter-spacing: 0.16px;">Hindi News, L...</span></span><svg class="a" style="left:629px;top:10px" width="16" height="13" viewBox="0 0 16 13"><path d="M0 12V1.500l2-1.300L8 5l6-4.800 2 1.300V12h-3.500V5.500L8 9 3.500 5.500V12z" fill="#ea4335"></path><path d="M0 1.500V12h3.500V4.500z" fill="#4285f4"></path><path d="M16 1.500V12h-3.500V4.500z" fill="#34a853"></path><path d="M12.500 2l1.500-1.800 2 1.300v3z" fill="#fbbc05"></path><path d="M0 1.500L2 .2 3.500 2v2.500z" fill="#c5221f"></path></svg><span class="a" style="left:653px;top:0"><span class="n" style="letter-spacing: 0.38px;">Gmail</span></span><svg class="a" style="left:710px;top:10px" width="17" height="12" viewBox="0 0 17 12"><rect width="17" height="12" rx="3" fill="#ff0000"></rect><path d="M6.800 3.300v5.400L11.500 6z" fill="#fff"></path></svg><span class="a" style="left:734px;top:0"><span class="n" style="letter-spacing: 0.24px;">YouTube</span></span><svg class="a" style="left:812px;top:8px" width="12" height="17" viewBox="0 0 12 17"><path d="M6 0a6 6 0 00-6 6c0 4 4.500 6.500 6 11 1.500-4.500 6-7 6-11a6 6 0 00-6-6z" fill="#34a853"></path><path d="M6 0a6 6 0 00-4.600 2.200L6 6z" fill="#ea4335"></path><path d="M1.400 2.200A6 6 0 000 6c0 1.300.5 2.500 1.200 3.600L6 6z" fill="#4285f4"></path><path d="M10.600 2.200L1.200 9.600C2.500 11.800 4.800 13.500 6 17z" fill="#fbbc05" opacity=".9"></path><circle cx="6" cy="6" r="2.200" fill="#fff"></circle></svg><span class="a" style="left:834px;top:0"><span class="n" style="letter-spacing: 0.43px;">Maps</span></span><svg class="a" style="left:933px;top:12px" width="9" height="8" viewBox="0 0 9 8"><path d="M1 1l3 3-3 3M5 1l3 3-3 3" fill="none" stroke="#e8eaed" stroke-width="1.600"></path></svg></div><div id="dvt" class="a"><span class="a" style="left:199px;top:0"><span class="n" style="letter-spacing: 0.15px;">Dimensions: Pixel 5</span></span><svg class="a" style="left:287px;top:8px" width="7" height="7" viewBox="0 0 7 7"><path d="M0 .5h7L3.500 6.500z" fill="#333"></path></svg><svg class="a" style="left:434px;top:8px" width="7" height="7" viewBox="0 0 7 7"><path d="M0 .5h7L3.500 6.500z" fill="#333"></path></svg><svg class="a" style="left:512px;top:8px" width="7" height="7" viewBox="0 0 7 7"><path d="M0 .5h7L3.500 6.500z" fill="#333"></path></svg><div class="a" style="left:307px;top:4px;width:38px;height:14px;background:#f1f3f4;border:1px solid #dadce0;border-radius:2px;line-height:11px;padding-left:5px;color:#5f6368"><span class="n" style="letter-spacing: 0.15px;">393</span></div><div class="a" style="left:358px;top:4px;width:38px;height:14px;background:#f1f3f4;border:1px solid #dadce0;border-radius:2px;line-height:11px;padding-left:5px;color:#5f6368"><span class="n" style="letter-spacing: 0.15px;">851</span></div><span class="a" style="left:349px;top:0;color:#5f6368;font-size:11px"><span class="n" style="letter-spacing: -0.14px;">×</span></span><span class="a" style="left:411.500px;top:0"><span class="n" style="letter-spacing: -0.08px;">95%</span></span><span class="a" style="left:450px;top:0"><span class="n" style="letter-spacing: 0.49px;">No throttling</span></span><svg class="a" style="left:535px;top:5px" width="13" height="13" viewBox="0 0 13 13"><rect x="3.500" y="1" width="6" height="11" rx="1" fill="none" stroke="#5f6368" stroke-width="1.100" transform="rotate(-45 6.500 6.500)"></rect><path d="M1 1l11 11" stroke="#5f6368" stroke-width="1"></path></svg><svg class="a" style="left:687px;top:5px" width="4" height="12" viewBox="0 0 4 12"><circle cx="2" cy="2" r="1.100" fill="#5f6368"></circle><circle cx="2" cy="6" r="1.100" fill="#5f6368"></circle><circle cx="2" cy="10" r="1.100" fill="#5f6368"></circle></svg></div><div id="ruler" class="a"><div class="a" style="left:60px;top:0;width:1px;height:15px;background:#fff"></div><div class="a" style="left:191px;top:0;width:1px;height:15px;background:#fff"></div><div class="a" style="left:210px;top:0;width:1px;height:15px;background:#fff"></div><div class="a" style="left:230px;top:0;width:1px;height:15px;background:#fff"></div><div class="a" style="left:473px;top:0;width:1px;height:15px;background:#fff"></div><div class="a" style="left:494px;top:0;width:1px;height:15px;background:#fff"></div><div class="a" style="left:513px;top:0;width:1px;height:15px;background:#fff"></div><div class="a" style="left:643px;top:0;width:1px;height:15px;background:#fff"></div></div><div id="view" class="a"><div class="a" style="left:165px;top:17px;width:373.500px;height:807.500px;background:#dad0d0;box-shadow:0 1px 8px rgba(0,0,0,.2);overflow:hidden;font-family:'Liberation Sans',sans-serif"><div class="a" style="left:9.600px;top:132.7px;width:354.400px;height:119.400px;background:#fff;border-radius:9.500px;box-shadow:0 2px 4px rgba(0,0,0,.2)"></div><div class="a" style="left:9.600px;top:132.7px;width:354.400px;height:119.700px"><div class="a" style="left:26.400px;top:19.200px;width:81.700px;height:81.700px;border-radius:7.600px;overflow:hidden;box-shadow:0 2px 4px rgba(0,0,0,.2)"><svg width="81.700" height="81.700" viewBox="0 0 100 100" preserveAspectRatio="none" style="display:block"><filter id="bl_book" x="-10%" y="-10%" width="120%" height="120%"><feGaussianBlur stdDeviation="1.6"></feGaussianBlur></filter><rect width="100" height="100" fill="#d0d1c4"></rect>
<g filter="url(#bl_book)"><rect x="-5" y="-5" width="110" height="27" fill="#d3d4c8"></rect><rect x="-5" y="21" width="110" height="12" fill="#c9ad93"></rect>
<path d="M-5 28C15 24 35 25 46 34L47 72-5 64z" fill="#e9e7c6"></path><path d="M0 36C15 33 30 34 40 40L41 62 0 58z" fill="#d3d2bb"></path>
<path d="M49 37C60 28 85 28 105 31L105 64 49 72z" fill="#f0efce"></path><path d="M58 38C70 34 85 35 105 37L105 60 59 64z" fill="#d6d5bd"></path>
<path d="M46 34L47.500 70 49.500 70 50 36z" fill="#b9b08c"></path>
<path d="M-5 63L47 71 49 71 105 63 105 84-5 84z" fill="#552214"></path><path d="M-5 73L47 79 105 73V84H-5z" fill="#6a2d1a"></path><path d="M40 80a8 10 0 0116 0z" fill="#1a0a05"></path>
<rect x="-5" y="83" width="110" height="24" fill="#a85a2c"></rect><rect x="-5" y="82" width="110" height="3" fill="#5e2813"></rect><rect x="-5" y="90" width="110" height="15" fill="#b86a38"></rect></g></svg></div><div class="a g" style="left:123.200px;top:21px;height:26px;line-height:26px;font-size:17.100px;color:#0d0d0d;white-space:pre">Nathaniel Schuster</div><div class="a g" style="left:123.200px;top:50px;height:20px;line-height:20px;font-size:13.300px;color:#808080;white-space:pre">Principal Engineer | Pro…</div><div class="a g" style="left:123.200px;top:73px;height:20px;line-height:20px;font-size:13.300px;color:#808080;white-space:pre">M.Tech from BITS Pilani</div><div class="a" style="left:123.200px;top:107px;width:174px;height:1px;background:#dedede"></div></div><div class="a" style="left:9.600px;top:261.5px;width:354.400px;height:119.400px;background:#fff;border-radius:9.500px;box-shadow:0 2px 4px rgba(0,0,0,.2)"></div><div class="a" style="left:9.600px;top:261.6px;width:354.400px;height:119.700px"><div class="a" style="left:26.400px;top:19.200px;width:81.700px;height:81.700px;border-radius:7.600px;overflow:hidden;box-shadow:0 2px 4px rgba(0,0,0,.2)"><svg width="81.700" height="81.700" viewBox="0 0 100 100" preserveAspectRatio="none" style="display:block"><filter id="bl_light" x="-10%" y="-10%" width="120%" height="120%"><feGaussianBlur stdDeviation="1.1"></feGaussianBlur></filter><defs><linearGradient id="lg1" x1="0" y1="0" x2="1" y2="1"><stop offset="0" stop-color="#5a5a5a"></stop><stop offset=".3" stop-color="#a2a2a2"></stop><stop offset=".55" stop-color="#747474"></stop><stop offset=".8" stop-color="#bdbdbd"></stop><stop offset="1" stop-color="#e2e2e2"></stop></linearGradient></defs>
<rect width="100" height="100" fill="url(#lg1)"></rect>
<g filter="url(#bl_light)"><path d="M-5 22L105 -2v9L-5 34zM-5 52L105 30v7L-5 60zM30 0L105 -14v5z" fill="#d4d4d4" opacity=".55"></path><path d="M-5 8L60 -6v5L-5 16zM50 40L105 28v-8L50 32z" fill="#3c3c3c" opacity=".35"></path>
<rect x="-5" y="72" width="110" height="10" fill="#d6d6d6"></rect>
<path d="M0 80L20 78 40 83 60 82 80 79 105 82V105H-5z" fill="#5d5d5d"></path><path d="M-5 88L15 85 30 92 50 88 70 94 105 88V105H-5z" fill="#2a2a2a"></path><path d="M5 91l10-4 8 6zM40 93l12-3 6 7zM72 91l10-3 9 6zM22 98l9-3 5 5zM58 99l8-2 6 4z" fill="#a4a4a4"></path></g>
<g filter="url(#bl_light)"><path d="M38.500 44h23l2.500 44H36z" fill="#d9d9d9"></path><path d="M52 44h9.500l2.500 44H54z" fill="#a9a9a9"></path><path d="M34 37h32v7H34z" fill="#262626"></path><path d="M40 26h20v11H40z" fill="#444"></path><path d="M43 28h14v8H43z" fill="#8c8c8c"></path><path d="M41 26l9-6 9 6z" fill="#181818"></path><rect x="49.500" y="16" width="1" height="5" fill="#222"></rect><rect x="47" y="51" width="6" height="8" fill="#4a4a4a"></rect><rect x="46" y="71" width="9" height="16" fill="#1e1e1e"></rect></g></svg></div><div class="a g" style="left:123.200px;top:21px;height:26px;line-height:26px;font-size:17.100px;color:#0d0d0d;white-space:pre">Jane Doe</div><div class="a g" style="left:123.200px;top:51px;height:20px;line-height:20px;font-size:13.300px;color:#808080;white-space:pre">Senior Software Engine…</div><div class="a g" style="left:123.200px;top:73px;height:20px;line-height:20px;font-size:13.300px;color:#808080;white-space:pre">B.Sc. in Computer Science</div><div class="a" style="left:123.200px;top:106px;width:174px;height:1px;background:#dedede"></div></div><div class="a" style="left:9.600px;top:390.3px;width:354.400px;height:119.400px;background:#fff;border-radius:9.500px;box-shadow:0 2px 4px rgba(0,0,0,.2)"></div><div class="a" style="left:9.600px;top:390.5px;width:354.400px;height:119.700px"><div class="a" style="left:26.400px;top:19.200px;width:81.700px;height:81.700px;border-radius:7.600px;overflow:hidden;box-shadow:0 2px 4px rgba(0,0,0,.2)"><svg width="81.700" height="81.700" viewBox="0 0 100 100" preserveAspectRatio="none" style="display:block"><filter id="bl_sun" x="-10%" y="-10%" width="120%" height="120%"><feGaussianBlur stdDeviation="1.6"></feGaussianBlur></filter><defs><radialGradient id="rg1" cx=".62" cy=".22" r=".75"><stop offset="0" stop-color="#fff"></stop><stop offset=".5" stop-color="#fefbf3"></stop><stop offset=".68" stop-color="#ecd2a4"></stop><stop offset="1" stop-color="#8a6a42"></stop></radialGradient></defs>
<rect width="100" height="100" fill="url(#rg1)"></rect>
<g filter="url(#bl_sun)"><path d="M-5 -5h16C20 8 14 20 24 30L27 46-5 52z" fill="#2c2b17"></path>
<path d="M55 43C70 42 85 39 105 37V105H55z" fill="#24211a"></path><rect x="62" y="63" width="45" height="4" fill="#a9a294"></rect><rect x="62" y="67" width="45" height="40" fill="#1d1b16"></rect>
<path d="M26 31a13 14 0 0122-9c4 3 4 9 2 13-1 3-3 6-5 8l10 6c9 4 11 14 11 24v32H-5V62c4-8 14-14 25-16l7-4c-2-3-1-7-1-11z" fill="#27211a"></path>
<path d="M38 18c8 0 13 5 13 12-3-4-8-6-14-5z" fill="#e6c58a" opacity=".55"></path>
<circle cx="42" cy="98" r="16" fill="none" stroke="#b8441d" stroke-width="2.500" opacity=".4"></circle></g></svg></div><div class="a g" style="left:123.200px;top:20px;height:26px;line-height:26px;font-size:17.100px;color:#0d0d0d;white-space:pre">John Smith</div><div class="a g" style="left:123.200px;top:50px;height:20px;line-height:20px;font-size:13.300px;color:#808080;white-space:pre">Data Scientist - Data Ins…</div><div class="a g" style="left:123.200px;top:73px;height:20px;line-height:20px;font-size:13.300px;color:#808080;white-space:pre">Ph.D. in Statistics</div><div class="a" style="left:123.200px;top:106.5px;width:174px;height:1px;background:#dedede"></div></div><div class="a" style="left:9.600px;top:519.1px;width:354.400px;height:119.400px;background:#fff;border-radius:9.500px;box-shadow:0 2px 4px rgba(0,0,0,.2)"></div><div class="a" style="left:9.600px;top:519.4px;width:354.400px;height:119.700px"><div class="a" style="left:26.400px;top:19.200px;width:81.700px;height:81.700px;border-radius:7.600px;overflow:hidden;box-shadow:0 2px 4px rgba(0,0,0,.2)"><svg width="81.700" height="81.700" viewBox="0 0 100 100" preserveAspectRatio="none" style="display:block"><filter id="bl_legs" x="-10%" y="-10%" width="120%" height="120%"><feGaussianBlur stdDeviation="1.1"></feGaussianBlur></filter><defs><linearGradient id="lg2" x1="0" y1="0" x2="0" y2="1"><stop offset="0" stop-color="#c2cfdc"></stop><stop offset=".6" stop-color="#dde4ea"></stop><stop offset="1" stop-color="#cfd3d6"></stop></linearGradient></defs>
<rect width="100" height="100" fill="url(#lg2)"></rect>
<g filter="url(#bl_legs)"><path d="M38 -5h12l-1 52h-9zM52 -5h13l-4 52h-9z" fill="#5e615a"></path><path d="M41 0h4v44h-4zM55 0h4l-1 44h-3z" fill="#7b7d75"></path><path d="M38.500 45h10.500v11H37.500zM51 45h10.500l1 11H51z" fill="#6b3c2c"></path>
<path d="M-5 62C10 54 25 57 36 56 50 52 70 50 80 56 90 60 105 64 105 64V105H-5z" fill="#4b4339"></path>
<path d="M-5 70l25-6 25 8 30-8 30 10v31H-5z" fill="#5a5247"></path><path d="M62 80l18-5 12 10-17 6zM12 94l20-5 8 14H10zM30 70l10-2 6 5-8 3zM70 62l8-2 5 4-7 3z" fill="#928c82"></path><path d="M-5 62l19-4 10 8-12 6zM48 82l10-2 4 8-12 2z" fill="#2d2923"></path></g></svg></div><div class="a g" style="left:123.200px;top:21px;height:26px;line-height:26px;font-size:17.100px;color:#0d0d0d;white-space:pre">Emily Johnson</div><div class="a g" style="left:123.200px;top:51px;height:20px;line-height:20px;font-size:13.300px;color:#808080;white-space:pre">UX/UI Designer - Creati…</div><div class="a g" style="left:123.200px;top:74px;height:20px;line-height:20px;font-size:13.300px;color:#808080;white-space:pre">B.Des in Visual Commu…</div><div class="a" style="left:123.200px;top:107px;width:174px;height:1px;background:#dedede"></div></div><div class="a" style="left:9.600px;top:647.9px;width:354.400px;height:119.400px;background:#fff;border-radius:9.500px;box-shadow:0 2px 4px rgba(0,0,0,.2)"></div><div class="a" style="left:9.600px;top:648.3px;width:354.400px;height:119.700px"><div class="a" style="left:26.400px;top:19.200px;width:81.700px;height:81.700px;border-radius:7.600px;overflow:hidden;box-shadow:0 2px 4px rgba(0,0,0,.2)"><svg width="81.700" height="81.700" viewBox="0 0 100 100" preserveAspectRatio="none" style="display:block"><filter id="bl_stars" x="-10%" y="-10%" width="120%" height="120%"><feGaussianBlur stdDeviation=".5"></feGaussianBlur></filter><defs><linearGradient id="lg3" x1="0" y1="0" x2="0" y2="1"><stop offset="0" stop-color="#0c1528"></stop><stop offset=".7" stop-color="#19263e"></stop><stop offset="1" stop-color="#222f46"></stop></linearGradient></defs>
<rect width="100" height="100" fill="url(#lg3)"></rect>
<g filter="url(#bl_stars)"><g stroke="#c5d0e4" stroke-width=".9" opacity=".42"><path d="M25 15l14 12M10 30l12 10M50 8l12 10M70 20l14 12M85 25l13 12M40 40l12 10M60 50l12 10M20 55l10 8M88 45l10 9M5 45l10 8M75 62l10 8M35 20l10 8M55 30l10 8M12 10l10 8M80 5l10 8M90 15l9 8M45 58l8 7M65 35l9 8M28 38l8 7M3 20l8 7M18 44l8 7M58 18l9 8M72 44l9 8M33 5l8 7M92 58l7 6M50 66l7 6M8 60l7 6"></path></g>
<g stroke="#eef2fa" stroke-width="1.300" opacity=".7"><path d="M26 17l11 9M86 27l12 11M4 40l9 8"></path></g>
<path d="M-5 74C15 70 25 78 40 78 55 76 70 86 105 86V105H-5z" fill="#2f1b13"></path><path d="M-5 86C20 84 50 90 105 92V105H-5z" fill="#150b07"></path></g></svg></div><div class="a g" style="left:123.200px;top:21px;height:26px;line-height:26px;font-size:17.100px;color:#0d0d0d;white-space:pre">John Smith</div><div class="a g" style="left:123.200px;top:50px;height:20px;line-height:20px;font-size:13.300px;color:#808080;white-space:pre">Data Scientist - Data Ins…</div><div class="a g" style="left:123.200px;top:73px;height:20px;line-height:20px;font-size:13.300px;color:#808080;white-space:pre">Ph.D. in Statistics</div><div class="a" style="left:123.200px;top:107px;width:174px;height:1px;background:#dedede"></div></div><div class="a" style="left:9.600px;top:776.7px;width:354.400px;height:119.400px;background:#fff;border-radius:9.500px;box-shadow:0 2px 4px rgba(0,0,0,.2)"></div><div class="a" style="left:9.600px;top:777.2px;width:354.400px;height:119.700px"><div class="a" style="left:26.400px;top:19.200px;width:81.700px;height:81.700px;border-radius:7.600px;overflow:hidden;box-shadow:0 2px 4px rgba(0,0,0,.2)"><svg width="81.700" height="81.700" viewBox="0 0 100 100" preserveAspectRatio="none" style="display:block"><filter id="bl_sky" x="-10%" y="-10%" width="120%" height="120%"><feGaussianBlur stdDeviation="1.3"></feGaussianBlur></filter><rect width="100" height="100" fill="#3a76c2"></rect><g filter="url(#bl_sky)"><path d="M-5 4C10 0 20 8 30 6 40 2 55 10 60 14 50 18 30 16 20 18 10 16-5 14-5 14z" fill="#e9eff6"></path><path d="M50 -3C70 4 90 2 105 8V20C85 18 70 16 60 10z" fill="#d3dce7"></path><path d="M70 -5h35v12C90 6 80 4 70 -5z" fill="#667788"></path></g></svg></div><div class="a g" style="left:123.200px;top:21px;height:26px;line-height:26px;font-size:17.100px;color:#0d0d0d;white-space:pre">Emily Johnson</div><div class="a g" style="left:123.200px;top:50px;height:20px;line-height:20px;font-size:13.300px;color:#808080;white-space:pre">UX/UI Designer - Creati…</div><div class="a g" style="left:123.200px;top:73px;height:20px;line-height:20px;font-size:13.300px;color:#808080;white-space:pre">B.Des in Visual Commu…</div><div class="a" style="left:123.200px;top:107px;width:174px;height:1px;background:#dedede"></div></div><div class="a" style="left:0;top:53px;width:373px;height:63px;background:#ffc921"></div><div class="a" style="left:0;top:53px;width:373px;height:5px;background:linear-gradient(180deg,rgba(120,90,0,.45),rgba(120,90,0,0))"></div><div class="a" style="left:133px;top:68.300px;width:107.300px;height:32.300px;background:#087cff;border-radius:3px;color:#fff;font-size:13.300px;line-height:34px;text-align:center"><span class="g">Select Filter</span></div><div class="a" style="left:0;top:0;width:373.500px;height:53px;background:#fff"></div><div class="a g" style="left:19px;top:0;height:53px;line-height:52px;font-size:19px;color:#424242">tutors</div></div></div><div id="dt" class="a"><div class="a" style="left:0;top:0;width:255px;height:23px;background:#f1f3f4;border-bottom:1px solid #cbcdd1"></div><svg class="a" style="left:8px;top:5px" width="12" height="12" viewBox="0 0 12 12"><path d="M1.500 8.500v-7h8v3" fill="none" stroke="#5f6368" stroke-width="1.100" stroke-dasharray="1.500 1"></path><path d="M5.500 4.500l5.500 2.300-2.300.9 1.800 2.300-1 .8-1.800-2.300-1.400 1.800z" fill="#5f6368"></path></svg><svg class="a" style="left:28px;top:4px" width="13" height="14" viewBox="0 0 13 14"><rect x="4" y="1" width="8" height="12" rx="1" fill="none" stroke="#1a73e8" stroke-width="1.200"></rect><rect x="1" y="5" width="5" height="8" rx=".8" fill="#f1f3f4" stroke="#1a73e8" stroke-width="1.200"></rect></svg><div class="a" style="left:49px;top:5px;width:1px;height:13px;background:#cbcdd1"></div><span class="a" style="left:64px;top:1px;height:22px;line-height:21px;font-size:9.250px;color:#202124"><span class="n" style="letter-spacing: 0.19px;">Elements</span></span><div class="a" style="left:54px;top:21px;width:59px;height:2px;background:#1a73e8"></div><svg class="a" style="left:121px;top:7px" width="9" height="8" viewBox="0 0 9 8"><path d="M1 1l3 3-3 3M5 1l3 3-3 3" fill="none" stroke="#5f6368" stroke-width="1.100"></path></svg><div class="a" style="left:148px;top:4px;width:30px;height:15px;border:1px solid #cbcdd1;border-radius:2px;background:#f1f3f4"></div><svg class="a" style="left:155px;top:7px" width="9" height="9" viewBox="0 0 9 9"><path d="M0 0h9v6.500H3L0 9z" fill="#1a73e8"></path><path d="M2 2h5M2 4h3.500" stroke="#fff" stroke-width=".8"></path></svg><span class="a" style="left:167px;top:0;height:22px;line-height:22px;font-size:9.250px;color:#202124"><span class="n" style="letter-spacing: 0.14px;">1</span></span><div class="a" style="left:183px;top:5px;width:1px;height:13px;background:#cbcdd1"></div><svg class="a" style="left:192px;top:5px" width="12" height="12" viewBox="0 0 12 12"><path d="M5 0h2l.4 1.600 1.100.5 1.400-.9 1.400 1.400-.9 1.400.5 1.100L12.500 5.500v2l-1.600.4-.5 1.100.9 1.400-1.400 1.400-1.400-.9-1.100.5L7 13H5l-.4-1.600-1.100-.5-1.400.9L.7 10.400l.9-1.400-.5-1.100L-.5 7.500v-2l1.600-.4.5-1.100-.9-1.400L2.100 1.200l1.400.9 1.100-.5z" fill="#5f6368" transform="scale(.92)"></path><circle cx="5.500" cy="6" r="1.800" fill="#f1f3f4"></circle></svg><svg class="a" style="left:219px;top:5px" width="4" height="12" viewBox="0 0 4 12"><circle cx="2" cy="2" r="1.100" fill="#5f6368"></circle><circle cx="2" cy="6" r="1.100" fill="#5f6368"></circle><circle cx="2" cy="10" r="1.100" fill="#5f6368"></circle></svg><svg class="a" style="left:237px;top:6px" width="10" height="10" viewBox="0 0 10 10"><path d="M1.500 1.500l7 7M8.500 1.500l-7 7" stroke="#5f6368" stroke-width="1.300"></path></svg><div class="a" style="left:0;top:76px;width:255px;height:12.500px;background:#e3e5e8"></div><div class="a m dl" style="left:11px;top:23.8px"><span style="color:#c0c0c0">&lt;!DOCTYPE html&gt;</span></div><div class="a m dl" style="left:11px;top:36.8px"><span style="color:#881280">&lt;html </span><span style="color:#994500">lang</span><span style="color:#881280">="</span><span style="color:#1a1aa6">en</span><span style="color:#881280">" </span><span style="color:#994500">class</span><span style="color:#881280">="</span><span style="color:#1a1aa6">plt-android plt-mobile</span></div><div class="a m dl" style="left:11px;top:48.8px"><span style="color:#1a1aa6">plt-mobileweb md hydrated</span><span style="color:#881280">" </span><span style="color:#994500">mode</span><span style="color:#881280">="</span><span style="color:#1a1aa6">md</span><span style="color:#881280">"&gt;</span></div><div class="a m dl" style="left:21px;top:61.8px"><span style="color:#881280">&lt;head&gt;</span><span style="display:inline-block;width:11px;height:7px;border:1px solid #bbb;border-radius:4px;background:#f1f3f4;vertical-align:middle;margin:0 1px;position:relative;top:-1px;font-size:6px;line-height:3px;text-align:center;color:#444;letter-spacing:0;overflow:hidden;font-family:'Liberation Sans',sans-serif">…</span><span style="color:#881280">&lt;/head&gt;</span></div><div class="a m dl" style="left:21px;top:74.8px"><span style="color:#881280">&lt;body </span><span style="color:#994500">class</span><span style="color:#881280">&gt;</span> <span style="color:#80868b">== <i>$0</i></span></div><div class="a m dl" style="left:30px;top:88.8px"><span style="color:#881280">&lt;app-root </span><span style="color:#994500">_nghost-ng-c750168442</span> <span style="color:#994500">ng-</span></div><div class="a m dl" style="left:30px;top:100.8px"><span style="color:#994500">version</span><span style="color:#881280">="</span><span style="color:#1a1aa6">16.2.2</span><span style="color:#881280">"&gt;</span><span style="display:inline-block;width:11px;height:7px;border:1px solid #bbb;border-radius:4px;background:#f1f3f4;vertical-align:middle;margin:0 1px;position:relative;top:-1px;font-size:6px;line-height:3px;text-align:center;color:#444;letter-spacing:0;overflow:hidden;font-family:'Liberation Sans',sans-serif">…</span><span style="color:#881280">&lt;/app-root&gt;</span></div><div class="a m dl" style="left:30px;top:113.8px"><span style="color:#881280">&lt;script </span><span style="color:#994500">src</span><span style="color:#881280">="</span><span style="color:#1a73e8;text-decoration:underline">runtime.js</span><span style="color:#881280">" </span><span style="color:#994500">type</span><span style="color:#881280">="</span><span style="color:#1a1aa6">module</span><span style="color:#881280">"&gt;</span></div><div class="a m dl" style="left:30px;top:125.8px"><span style="color:#881280">&lt;/script&gt;</span></div><div class="a m dl" style="left:30px;top:137.8px"><span style="color:#881280">&lt;script </span><span style="color:#994500">src</span><span style="color:#881280">="</span><span style="color:#1a73e8;text-decoration:underline">polyfills.js</span><span style="color:#881280">" </span><span style="color:#994500">type</span><span style="color:#881280">="</span><span style="color:#1a1aa6">module</span><span style="color:#881280">"&gt;</span></div><div class="a m dl" style="left:30px;top:149.8px"><span style="color:#881280">&lt;/script&gt;</span></div><div class="a m dl" style="left:30px;top:162.8px"><span style="color:#881280">&lt;script </span><span style="color:#994500">src</span><span style="color:#881280">="</span><span style="color:#1a73e8;text-decoration:underline">styles.js</span><span style="color:#881280">" </span><span style="color:#994500">defer</span><span style="color:#881280">&gt;&lt;/script&gt;</span></div><div class="a m dl" style="left:30px;top:175.8px"><span style="color:#881280">&lt;script </span><span style="color:#994500">src</span><span style="color:#881280">="</span><span style="color:#1a73e8;text-decoration:underline">vendor.js</span><span style="color:#881280">" </span><span style="color:#994500">type</span><span style="color:#881280">="</span><span style="color:#1a1aa6">module</span><span style="color:#881280">"&gt;</span></div><div class="a m dl" style="left:30px;top:187.8px"><span style="color:#881280">&lt;/script&gt;</span></div><div class="a m dl" style="left:30px;top:200.8px"><span style="color:#881280">&lt;script </span><span style="color:#994500">src</span><span style="color:#881280">="</span><span style="color:#1a73e8;text-decoration:underline">main.js</span><span style="color:#881280">" </span><span style="color:#994500">type</span><span style="color:#881280">="</span><span style="color:#1a1aa6">module</span><span style="color:#881280">"&gt;</span></div><div class="a m dl" style="left:30px;top:212.8px"><span style="color:#881280">&lt;/script&gt;</span></div><div class="a m dl" style="left:21px;top:224.8px"><span style="color:#881280">&lt;/body&gt;</span></div><div class="a m dl" style="left:11px;top:237.8px"><span style="color:#881280">&lt;/html&gt;</span></div><svg class="a" style="left:15px;top:65px" width="6" height="6" viewBox="0 0 6 6"><path d="M1 0l4 3-4 3z" fill="#5f6368"></path></svg><svg class="a" style="left:14px;top:78px" width="6" height="6" viewBox="0 0 6 6"><path d="M0 1h6L3 5z" fill="#5f6368"></path></svg><svg class="a" style="left:24px;top:92px" width="6" height="6" viewBox="0 0 6 6"><path d="M1 0l4 3-4 3z" fill="#5f6368"></path></svg><svg class="a" style="left:3px;top:81.5px" width="8" height="2" viewBox="0 0 8 2"><circle cx="1" cy="1" r=".8" fill="#5f6368"></circle><circle cx="4" cy="1" r=".8" fill="#5f6368"></circle><circle cx="7" cy="1" r=".8" fill="#5f6368"></circle></svg><div class="a" style="left:0;top:354px;width:255px;height:20px;background:#f1f3f4;border-top:1px solid #cbcdd1;border-bottom:1px solid #cbcdd1"></div><svg class="a" style="left:8px;top:361px" width="6" height="6" viewBox="0 0 6 6"><path d="M5 0L1 3l4 3z" fill="#333"></path></svg><div class="a" style="left:18px;top:355px;width:185px;height:18px;background:#fff"></div><span class="a" style="left:20px;top:355px;height:18px;line-height:18px;font-size:9.250px;color:#994500"><span class="n" style="letter-spacing: 0.38px;">id.plt-mobile.plt-mobileweb.md.hydrated</span></span><span class="a" style="left:209px;top:355px;height:18px;line-height:18px;font-size:9.250px;color:#881280"><span class="n" style="letter-spacing: 0.41px;">body</span></span><svg class="a" style="left:243px;top:361px" width="6" height="6" viewBox="0 0 6 6"><path d="M1 0l4 3-4 3z" fill="#80868b"></path></svg><div class="a" style="left:0;top:374px;width:255px;height:22px;background:#f1f3f4;border-bottom:1px solid #cbcdd1"></div><span class="a" style="left:8px;top:374px;height:21px;line-height:20px;font-size:9.250px;color:#202124"><span class="n" style="letter-spacing: -0.01px;">Styles</span></span><span class="a" style="left:50px;top:374px;height:21px;line-height:20px;font-size:9.250px;color:#5f6368"><span class="n" style="letter-spacing: 0.38px;">Computed</span></span><span class="a" style="left:111px;top:374px;height:21px;line-height:20px;font-size:9.250px;color:#5f6368"><span class="n" style="letter-spacing: 0.27px;">Layout</span></span><span class="a" style="left:157px;top:374px;height:21px;line-height:20px;font-size:9.250px;color:#5f6368"><span class="n" style="letter-spacing: 0.14px;">Event Listeners</span></span><div class="a" style="left:0;top:394px;width:41px;height:2px;background:#1a73e8"></div><svg class="a" style="left:237px;top:380px" width="9" height="8" viewBox="0 0 9 8"><path d="M1 1l3 3-3 3M5 1l3 3-3 3" fill="none" stroke="#5f6368" stroke-width="1.100"></path></svg><div class="a" style="left:0;top:396px;width:243px;height:22px;background:#f1f3f4;border-bottom:1px solid #cbcdd1"></div><div class="a" style="left:2px;top:399px;width:107px;height:16px;background:#fff"></div><span class="a" style="left:5px;top:397px;height:20px;line-height:20px;font-size:9.250px;color:#80868b"><span class="n" style="letter-spacing: 0.23px;">Filter</span></span><span class="a m" style="left:117px;top:397px;height:20px;line-height:19px;font-size:8.800px;color:#5f6368;font-weight:bold">:hov</span><span class="a m" style="left:146px;top:397px;height:20px;line-height:19px;font-size:8.800px;color:#5f6368;font-weight:bold">.cls</span><svg class="a" style="left:178px;top:401px" width="11" height="11" viewBox="0 0 11 11"><path d="M5 1v8M1 5h8" stroke="#5f6368" stroke-width="1.100"></path><path d="M10.500 8v3h-3z" fill="#5f6368"></path></svg><svg class="a" style="left:199px;top:400px" width="11" height="12" viewBox="0 0 11 12"><rect x="1" y="1" width="9" height="5" rx="1" fill="#5f6368"></rect><path d="M2.500 2.500h6" stroke="#f1f3f4" stroke-width="1"></path><path d="M3.500 6v2.500h4V6M4.500 8.500V11h2V8.500" fill="#5f6368" stroke="#5f6368" stroke-width=".8"></path></svg><svg class="a" style="left:220px;top:401px" width="12" height="11" viewBox="0 0 12 11"><rect x=".6" y=".6" width="10.800" height="9.800" fill="none" stroke="#5f6368" stroke-width="1.100"></rect><path d="M8.500 .6v10" stroke="#5f6368" stroke-width="1.100"></path><path d="M6.500 3.500L4 5.500l2.500 2z" fill="#5f6368"></path></svg><div class="a" style="left:0;top:418px;width:243px;height:279px;overflow:hidden"><div class="a" style="left:0;top:27px;width:243px;height:1px;background:#dadce0"></div><div class="a m dl" style="left:3px;top:-0.2px;color:#202124"><span style="color:#80868b">element.style</span> {</div><div class="a m dl" style="left:3px;top:12.8px;color:#202124">}</div><div class="a m dl" style="left:3px;top:28.8px;color:#202124">body {</div><div class="a m dl" style="left:17px;top:41.8px;color:#202124"><span style="color:#9aa0a6">-moz-osx-font-smoothing: <s>grayscale</s>;</span></div><div class="a m dl" style="left:17px;top:52.8px;color:#202124"><span style="color:#c80000">-webkit-font-smoothing</span>: antialiased;</div><div class="a m dl" style="left:17px;top:63.8px;color:#202124"><span style="color:#c80000">margin-left</span>: 0;</div><div class="a m dl" style="left:17px;top:74.8px;color:#202124"><span style="color:#c80000">margin-right</span>: 0;</div><div class="a m dl" style="left:17px;top:86.8px;color:#202124"><span style="color:#c80000">margin-top</span>: 0;</div><div class="a m dl" style="left:17px;top:97.8px;color:#202124"><span style="color:#c80000">margin-bottom</span>: 0;</div><div class="a m dl" style="left:17px;top:108.8px;color:#202124"><span style="color:#c80000">padding-left</span>: 0;</div><div class="a m dl" style="left:17px;top:119.8px;color:#202124"><span style="color:#c80000">padding-right</span>: 0;</div><div class="a m dl" style="left:17px;top:130.8px;color:#202124"><span style="color:#c80000">padding-top</span>: 0;</div><div class="a m dl" style="left:17px;top:141.8px;color:#202124"><span style="color:#c80000">padding-bottom</span>: 0;</div><div class="a m dl" style="left:17px;top:153.8px;color:#202124"><span style="color:#c80000">position</span>: fixed;</div><div class="a m dl" style="left:17px;top:164.8px;color:#202124"><span style="color:#c80000">width</span>: 100%;</div><div class="a m dl" style="left:17px;top:175.8px;color:#202124"><span style="color:#c80000">max-width</span>: 100%;</div><div class="a m dl" style="left:17px;top:186.8px;color:#202124"><span style="color:#c80000">height</span>: 100%;</div><div class="a m dl" style="left:17px;top:197.8px;color:#202124"><span style="color:#c80000">max-height</span>: 100%;</div><div class="a m dl" style="left:17px;top:209.8px;color:#202124"><span style="color:#c80000">transform</span>: translateZ(0);</div><div class="a m dl" style="left:17px;top:220.8px;color:#202124"><span style="color:#c80000">text-rendering</span>: optimizeLegibility;</div><div class="a m dl" style="left:17px;top:231.8px;color:#202124"><span style="color:#c80000">overflow</span>:<span style="display:inline-block;width:12px"></span>hidden;</div><div class="a m dl" style="left:17px;top:242.8px;color:#202124"><span style="color:#c80000">touch-action</span>: manipulation;</div><div class="a m dl" style="left:17px;top:253.8px;color:#202124"><span style="color:#c80000">-webkit-user-drag</span>: none;</div><div class="a m dl" style="left:17px;top:265.8px;color:#202124"><span style="color:#9aa0a6">-ms-content-zooming: <s>none</s>;</span></div><div class="a m dl" style="left:148px;top:28.8px;color:#202124;text-decoration:underline">structure.scss:37</div><svg class="a" style="left:66px;top:235px" width="6" height="6" viewBox="0 0 6 6"><path d="M1 0l4 3-4 3z" fill="#5f6368"></path></svg></div><div class="a" style="left:243px;top:396px;width:13px;height:301px;background:#f1f3f4"></div><svg class="a" style="left:246px;top:402px" width="7" height="5" viewBox="0 0 7 5"><path d="M0 4.500L3.500 .5 7 4.500z" fill="#8a8a8a"></path></svg><div class="a" style="left:244px;top:410px;width:11px;height:45px;background:#c1c1c1"></div><svg class="a" style="left:246px;top:686px" width="7" height="5" viewBox="0 0 7 5"><path d="M0 .5h7L3.500 4.500z" fill="#3c3c3c"></path></svg><div class="a" style="left:0;top:698px;width:255px;height:23px;background:#f1f3f4;border-top:1px solid #cbcdd1;border-bottom:1px solid #cbcdd1"></div><svg class="a" style="left:11px;top:704px" width="4" height="12" viewBox="0 0 4 12"><circle cx="2" cy="2" r="1.100" fill="#5f6368"></circle><circle cx="2" cy="6" r="1.100" fill="#5f6368"></circle><circle cx="2" cy="10" r="1.100" fill="#5f6368"></circle></svg><span class="a" style="left:30px;top:699px;height:21px;line-height:20px;font-size:9.250px;color:#5f6368"><span class="n" style="letter-spacing: 0.12px;">Console</span></span><span class="a" style="left:80px;top:699px;height:21px;line-height:20px;font-size:9.250px;color:#5f6368"><span class="n" style="letter-spacing: 0.2px;">What's New</span></span><span class="a" style="left:155px;top:699px;height:21px;line-height:20px;font-size:9.250px;color:#202124"><span class="n" style="letter-spacing: 0.11px;">Issues</span></span><svg class="a" style="left:187px;top:707px" width="7" height="7" viewBox="0 0 7 7"><path d="M1 1l5 5M6 1l-5 5" stroke="#333" stroke-width="1.200"></path></svg><div class="a" style="left:147px;top:719px;width:50px;height:2px;background:#1a73e8"></div><svg class="a" style="left:236px;top:705px" width="10" height="10" viewBox="0 0 10 10"><path d="M1.500 1.500l7 7M8.500 1.500l-7 7" stroke="#5f6368" stroke-width="1.300"></path></svg><div class="a" style="left:0;top:721px;width:255px;height:21px;background:#f1f3f4;border-bottom:1px solid #cbcdd1"></div><div class="a" style="left:9px;top:726px;width:10px;height:10px;border:1px solid #767676;border-radius:2px;background:#fff"></div><div class="a" style="left:93px;top:726px;width:10px;height:10px;border:1px solid #767676;border-radius:2px;background:#fff"></div><span class="a" style="left:24px;top:721px;height:20px;line-height:20px;font-size:9.250px;color:#5f6368"><span class="n" style="letter-spacing: 0.27px;">Group by kind</span></span><span class="a" style="left:107px;top:721px;height:20px;line-height:20px;font-size:9.250px;color:#5f6368"><span class="n" style="letter-spacing: 0.26px;">Include third-party cookie issues</span></span><div class="a" style="left:253px;top:725px;width:1px;height:13px;background:#cbcdd1"></div><div class="a" style="left:0;top:742px;width:255px;height:47px;background:#e3e9f3;border-bottom:1px solid #cbcdd1"></div><svg class="a" style="left:8px;top:762px" width="6" height="6" viewBox="0 0 6 6"><path d="M1 0l4 3-4 3z" fill="#5f6368"></path></svg><svg class="a" style="left:21px;top:759px" width="11" height="12" viewBox="0 0 11 12"><path d="M0 1.500a1.500 1.500 0 011.500-1.500h8a1.500 1.500 0 011.500 1.500v6.500a1.500 1.500 0 01-1.500 1.500H3L0 12z" fill="#1a73e8"></path><path d="M2.500 3.500h6M2.500 6h4" stroke="#fff" stroke-width="1"></path></svg><div class="a" style="left:39px;top:760px;width:14px;height:10px;border:1px solid #bdc1c6;border-radius:5px;background:#f1f3f4;font-size:7px;line-height:8px;text-align:center;color:#333">1</div><span class="a" style="left:60px;top:747px;height:12px;line-height:12px;font-size:10.800px;color:#202124"><span class="n" style="letter-spacing: 0.3px;">Audit usage of navigator.userAgent,</span></span><span class="a" style="left:60px;top:759px;height:12px;line-height:12px;font-size:10.800px;color:#202124"><span class="n" style="letter-spacing: 0.29px;">navigator.appVersion, and</span></span><span class="a" style="left:60px;top:771px;height:12px;line-height:12px;font-size:10.800px;color:#202124"><span class="n" style="letter-spacing: 0.45px;">navigator.platform</span></span></div><div class="a" style="left:959px;top:37px;width:1px;height:1043px;background:#1b1d22"></div>

</body></html>
